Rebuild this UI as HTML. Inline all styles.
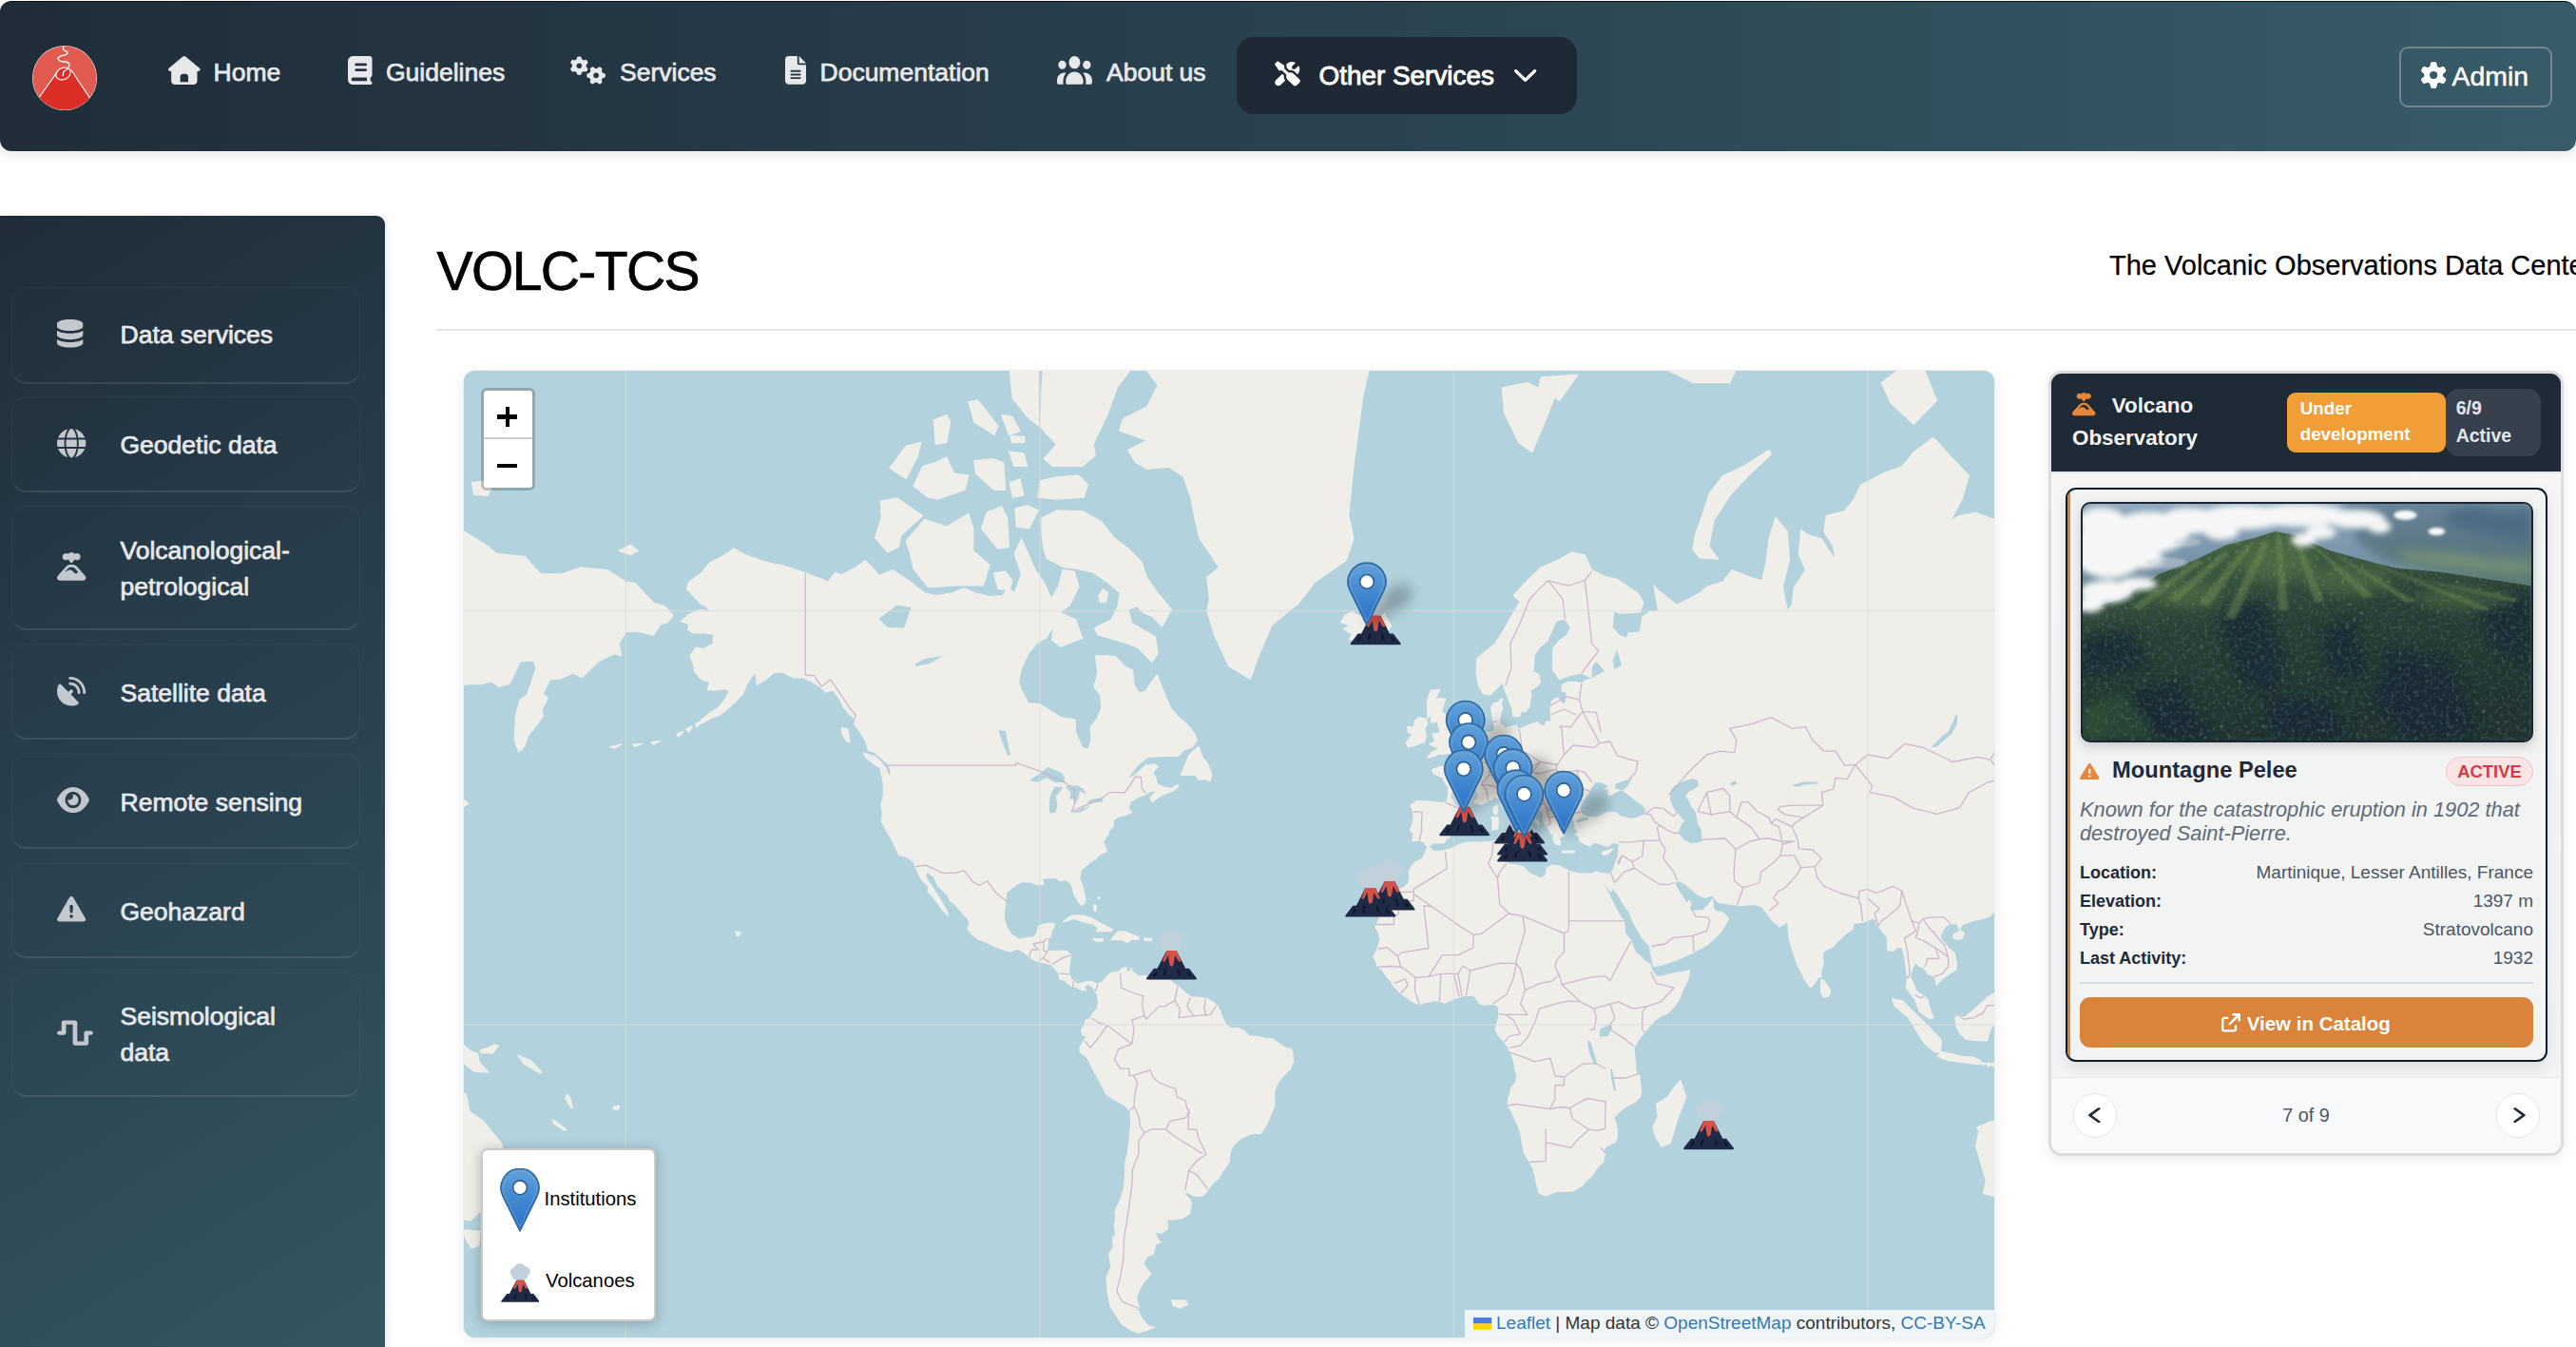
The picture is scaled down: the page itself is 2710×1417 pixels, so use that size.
<!DOCTYPE html>
<html><head><meta charset="utf-8"><title>VOLC-TCS</title>
<style>
*{box-sizing:border-box;margin:0;padding:0}
html,body{width:2710px;height:1417px;overflow:hidden;background:#fff;font-family:"Liberation Sans",sans-serif}
.abs{position:absolute}
svg.ic{position:absolute;fill:currentColor}
#nav{position:absolute;left:0;top:1px;width:2710px;height:158px;border-radius:12px;border-top:1px solid #0b111b;background:linear-gradient(90deg,#202d39 0%,#2a414e 50%,#385c69 100%);box-shadow:0 4px 14px rgba(0,0,0,0.10)}
#topline{position:absolute;left:0;top:0;width:2710px;height:2px;background:#1b2530}
.nt{position:absolute;color:#e6e8eb;font-weight:normal;font-size:26.5px;-webkit-text-stroke:0.75px currentColor;white-space:nowrap;line-height:1}
#other{position:absolute;left:1301px;top:37px;width:358px;height:80.5px;border-radius:18px;background:#1f2935}
#admin{position:absolute;left:2524px;top:47px;width:161px;height:64px;border-radius:9px;border:2px solid rgba(255,255,255,0.28)}
#side{position:absolute;left:0;top:227px;width:405px;height:1200px;border-radius:0 9px 0 0;background:linear-gradient(148deg,#202d39 0%,#2a4150 50%,#35575f 100%);box-shadow:2px 0 10px rgba(0,0,0,0.08)}
.si{position:absolute;left:12px;width:367px;border-radius:16px;border:1px solid rgba(255,255,255,0.035);border-bottom:2px solid rgba(255,255,255,0.10)}
.st{position:absolute;left:126.5px;color:#e6e8eb;font-weight:normal;font-size:26.5px;-webkit-text-stroke:0.75px currentColor;line-height:37.5px;white-space:nowrap}
.sic{color:#c3c8ce}
#title{position:absolute;left:459.5px;top:256.5px;font-size:57px;letter-spacing:-1.6px;-webkit-text-stroke:0.7px #000;color:#000;line-height:1;white-space:nowrap}
#tag{position:absolute;left:2219px;top:264.5px;font-size:29px;-webkit-text-stroke:0.25px #000;color:#000;line-height:1;white-space:nowrap}
#hr{position:absolute;left:459px;top:346px;width:2251px;height:2px;background:#dfe4ea}
#map{position:absolute;left:488px;top:390px;width:1610px;height:1017px;border-radius:12px;overflow:hidden;background:#b3d1dc;box-shadow:0 0 0 1px #eceef1,0 4px 16px rgba(0,0,0,0.08)}
#panel{position:absolute;left:2155px;top:390px;width:542px;height:826px;border-radius:14px;background:#f7f8fa;border:3px solid #dcdcdc;box-shadow:0 4px 14px rgba(0,0,0,0.08);overflow:hidden}
</style></head>
<body>
<div id="nav">
  <!-- logo -->
  <svg class="abs" style="left:33px;top:45px" width="70" height="70" viewBox="0 0 70 70">
    <defs><clipPath id="lc"><circle cx="35" cy="35" r="33.5"/></clipPath></defs>
    <circle cx="35" cy="35" r="34" fill="#fff"/>
    <g clip-path="url(#lc)">
      <rect x="0" y="0" width="70" height="70" fill="#e05a4f"/>
      <path d="M8 56 L28 27 Q35 22 41 26 L62 58 L70 70 L0 70 Z" fill="#dc2d26"/>
    </g>
    <path d="M8.5 55 L28 27.5 M41.5 26 L61.5 56" stroke="#fff" stroke-width="1.2" fill="none"/>
    <ellipse cx="33.5" cy="30.5" rx="8" ry="6" transform="rotate(-25 33.5 30.5)" fill="none" stroke="#fff" stroke-width="1.2"/>
    <path d="M34 2 Q32 6 37 7 Q40 9 35 11 Q28 12 28 15 Q29 18 36 18 Q42 19 39 24 Q37 27 34 28 L33 33" stroke="#fff" stroke-width="1.3" fill="none"/>
  </svg>
  <svg class="ic" style="left:176.69px;top:56.90px;color:#e6e8eb;overflow:visible" width="33.61" height="30.00" viewBox="0 0 512 512" preserveAspectRatio="none"><path d="M277.8 8.6c-12.3-11.4-31.3-11.4-43.5 0l-224 208c-9.6 9-12.8 22.9-8 35.1S18.8 272 32 272h16v176c0 35.3 28.7 64 64 64h288c35.3 0 64-28.7 64-64V272h16c13.2 0 25-8.1 29.8-20.3s1.6-26.2-8-35.1zM240 320h32c26.5 0 48 21.5 48 48v96H192v-96c0-26.5 21.5-48 48-48"/></svg>
  <div class="nt" style="left:224.5px;top:60.6px">Home</div>
  <svg class="ic" style="left:365.50px;top:56.90px;color:#e6e8eb;overflow:visible" width="25.50" height="30.00" viewBox="0 0 448 512" preserveAspectRatio="none"><path d="M384 512H96c-53 0-96-43-96-96V96C0 43 43 0 96 0h304c26.5 0 48 21.5 48 48v288c0 20.9-13.4 38.7-32 45.3V448c17.7 0 32 14.3 32 32s-14.3 32-32 32zM96 384c-17.7 0-32 14.3-32 32s14.3 32 32 32h256v-64zm32-232c0 13.3 10.7 24 24 24h176c13.3 0 24-10.7 24-24s-10.7-24-24-24H152c-13.3 0-24 10.7-24 24m24 72c-13.3 0-24 10.7-24 24s10.7 24 24 24h176c13.3 0 24-10.7 24-24s-10.7-24-24-24z"/></svg>
  <div class="nt" style="left:406px;top:60.6px">Guidelines</div>
  <svg class="ic" style="left:600.49px;top:57.14px;color:#e6e8eb;overflow:visible" width="37.39" height="29.68" viewBox="0 0 640 512" preserveAspectRatio="none"><path d="M308.5 135.3c7.1-6.3 9.9-16.2 6.2-25c-2.3-5.3-4.8-10.5-7.6-15.5L304 89.4c-3-5-6.3-9.9-9.8-14.6c-5.7-7.6-15.7-10.1-24.7-7.1l-28.2 9.3c-10.7-8.8-23-16-36.2-20.9L199 27.1c-1.9-9.3-9.1-16.7-18.5-17.8C173.9 8.4 167.2 8 160.4 8h-.7c-6.8 0-13.5 .4-20.1 1.2c-9.4 1.1-16.6 8.6-18.5 17.8L115 56.1c-13.3 5-25.5 12.1-36.2 20.9L50.5 67.8c-9-3-19-.5-24.7 7.1c-3.5 4.7-6.8 9.6-9.9 14.6l-3 5.3c-2.8 5-5.3 10.2-7.6 15.6c-3.7 8.7-.9 18.6 6.2 25l22.2 19.8C32.6 161.9 32 168.9 32 176s.6 14.1 1.7 20.9L11.5 216.7c-7.1 6.3-9.9 16.2-6.2 25c2.3 5.3 4.8 10.5 7.6 15.6l3 5.2c3 5.1 6.3 9.9 9.9 14.6c5.7 7.6 15.7 10.1 24.7 7.1l28.2-9.3c10.7 8.8 23 16 36.2 20.9l6.1 29.1c1.9 9.3 9.1 16.7 18.5 17.8c6.7 .8 13.5 1.2 20.4 1.2s13.7-.4 20.4-1.2c9.4-1.1 16.6-8.6 18.5-17.8l6.1-29.1c13.3-5 25.5-12.1 36.2-20.9l28.2 9.3c9 3 19 .5 24.7-7.1c3.5-4.7 6.8-9.5 9.8-14.6l3.1-5.4c2.8-5 5.3-10.1 7.6-15.5c3.7-8.7 .9-18.6-6.2-25l-22.2-19.8c1.1-6.8 1.7-13.8 1.7-20.9s-.6-14.1-1.7-20.9l22.2-19.8zM112 176a48 48 0 1 1 96 0 48 48 0 1 1 -96 0zM504.7 500.5c6.3 7.1 16.2 9.9 25 6.2c5.3-2.3 10.5-4.8 15.5-7.6l5.4-3.1c5-3 9.8-6.3 14.5-9.8c7.6-5.7 10.1-15.7 7.1-24.7l-9.3-28.2c8.8-10.7 16-23 20.9-36.2l29.1-6.1c9.3-1.9 16.7-9.1 17.8-18.5c.8-6.7 1.2-13.5 1.2-20.4s-.4-13.7-1.2-20.4c-1.1-9.4-8.6-16.6-17.8-18.5L583.9 307c-5-13.3-12.1-25.5-20.9-36.2l9.3-28.2c3-9 .5-19-7.1-24.7c-4.7-3.5-9.6-6.8-14.6-9.9l-5.3-3c-5-2.8-10.2-5.3-15.6-7.6c-8.7-3.7-18.6-.9-25 6.2l-19.8 22.2c-6.8-1.1-13.8-1.7-20.9-1.7s-14.1 .6-20.9 1.7l-19.8-22.2c-6.3-7.1-16.2-9.9-25-6.2c-5.3 2.3-10.5 4.8-15.6 7.6l-5.2 3c-5.1 3-9.9 6.3-14.6 9.9c-7.6 5.7-10.1 15.7-7.1 24.7l9.3 28.2c-8.8 10.7-16 23-20.9 36.2L315.1 313c-9.3 1.9-16.7 9.1-17.8 18.5c-.8 6.7-1.2 13.5-1.2 20.4s.4 13.7 1.2 20.4c1.1 9.4 8.6 16.6 17.8 18.5l29.1 6.1c5 13.3 12.1 25.5 20.9 36.2l-9.3 28.2c-3 9-.5 19 7.1 24.7c4.7 3.5 9.5 6.8 14.6 9.8l5.4 3.1c5 2.8 10.1 5.3 15.5 7.6c8.7 3.7 18.6 .9 25-6.2l19.8-22.2c6.8 1.1 13.8 1.7 20.9 1.7s14.1-.6 20.9-1.7l19.8 22.2zM464 304a48 48 0 1 1 0 96 48 48 0 1 1 0-96z"/></svg>
  <div class="nt" style="left:652px;top:60.6px">Services</div>
  <svg class="ic" style="left:826.00px;top:57.20px;color:#e6e8eb;overflow:visible" width="22.00" height="29.70" viewBox="0 0 384 512" preserveAspectRatio="none"><path d="M64 0C28.7 0 0 28.7 0 64V448c0 35.3 28.7 64 64 64H320c35.3 0 64-28.7 64-64V160H256c-17.7 0-32-14.3-32-32V0H64zM256 0V128H384L256 0zM112 256H272c8.8 0 16 7.2 16 16s-7.2 16-16 16H112c-8.8 0-16-7.2-16-16s7.2-16 16-16zm0 64H272c8.8 0 16 7.2 16 16s-7.2 16-16 16H112c-8.8 0-16-7.2-16-16s7.2-16 16-16zm0 64H272c8.8 0 16 7.2 16 16s-7.2 16-16 16H112c-8.8 0-16-7.2-16-16s7.2-16 16-16z"/></svg>
  <div class="nt" style="left:862.5px;top:60.6px">Documentation</div>
  <svg class="ic" style="left:1112.20px;top:56.18px;color:#e6e8eb;overflow:visible" width="36.90" height="32.77" viewBox="0 0 640 512" preserveAspectRatio="none"><path d="M320 16a104 104 0 1 1 0 208 104 104 0 1 1 0-208M96 88a72 72 0 1 1 0 144 72 72 0 1 1 0-144M0 416c0-70.7 57.3-128 128-128 12.8 0 25.2 1.9 36.9 5.4C132 330.2 112 378.8 112 432v16c0 11.4 2.4 22.2 6.7 32H32c-17.7 0-32-14.3-32-32zm521.3 64c4.3-9.8 6.7-20.6 6.7-32v-16c0-53.2-20-101.8-52.9-138.6 11.7-3.5 24.1-5.4 36.9-5.4 70.7 0 128 57.3 128 128v32c0 17.7-14.3 32-32 32zM472 160a72 72 0 1 1 144 0 72 72 0 1 1-144 0M160 432c0-88.4 71.6-160 160-160s160 71.6 160 160v16c0 17.7-14.3 32-32 32H192c-17.7 0-32-14.3-32-32z"/></svg>
  <div class="nt" style="left:1164px;top:60.6px">About us</div>
  <div id="other"></div>
  <svg class="ic" style="left:1339.76px;top:62.65px;color:#ffffff;overflow:visible" width="28.83" height="24.95" viewBox="0 0 576 512" preserveAspectRatio="none"><path d="M70.8-6.7c5.4-5.4 13.8-6.2 20.2-2l118.9 79.2c8.9 5.9 14.2 15.9 14.2 26.6v49.6l90.8 90.8c33.3-15 73.9-8.9 101.2 18.5l126.1 126.1c18.7 18.7 18.7 49.1 0 67.9l-60.1 60.1c-18.7 18.7-49.1 18.7-67.9 0L288.1 384c-27.4-27.4-33.5-67.9-18.5-101.2L178.8 192h-49.6c-10.7 0-20.7-5.3-26.6-14.2L23.4 58.9c-4.2-6.3-3.4-14.8 2-20.2zm145 303.5c-6.3 36.9 2.3 75.9 26.2 107.2l-94.9 95c-28.1 28.1-73.7 28.1-101.8 0s-28.1-73.7 0-101.8l135.4-135.5 35.2 35.1zM384.1 0c20.1 0 39.4 3.7 57.1 10.5 10 3.8 11.8 16.5 4.3 24.1l-56.7 56.7c-3 3-4.7 7.1-4.7 11.3V144c0 8.8 7.2 16 16 16h41.4c4.2 0 8.3-1.7 11.3-4.7l56.7-56.7c7.6-7.5 20.3-5.7 24.1 4.3 6.8 17.7 10.5 37 10.5 57.1 0 43.2-17.2 82.3-45 111.1L450 222c-33.1-33-78.5-45.7-121.1-38.4l-56.8-56.8V97.1l-.2-5c-.8-12.4-4.4-24.3-10.5-34.9C290.8 22.2 334.8 0 384.1-.1z"/></svg>
  <div class="nt" style="left:1387.5px;top:64px;color:#fff;font-size:27.9px;-webkit-text-stroke:0.9px #fff">Other Services</div>
  <svg class="ic" style="left:1593.20px;top:62.64px;color:#ffffff;overflow:visible" width="23.29" height="25.79" viewBox="0 0 448 512" preserveAspectRatio="none"><path d="M201.4 406.6c12.5 12.5 32.8 12.5 45.3 0l192-192c12.5-12.5 12.5-32.8 0-45.3s-32.8-12.5-45.3 0L224 338.7 54.6 169.4c-12.5-12.5-32.8-12.5-45.3 0s-12.5 32.8 0 45.3l192 192z"/></svg>
  <div id="admin"></div>
  <svg class="ic" style="left:2546.82px;top:63.71px;color:#ffffff;overflow:visible" width="26.32" height="26.07" viewBox="0 0 512 512" preserveAspectRatio="none"><path d="M195.1 9.5c3-14.8 16.1-25.5 31.3-25.5h59.8c15.2 0 28.3 10.7 31.3 25.5l14.5 70c14.1 6 27.3 13.7 39.3 22.8l67.8-22.5c14.4-4.8 30.2 1.2 37.8 14.4l29.9 51.8c7.6 13.2 4.9 29.8-6.5 39.9L447 233.3c.9 7.4 1.3 15 1.3 22.7s-.5 15.3-1.3 22.7l53.4 47.5c11.4 10.1 14 26.8 6.5 39.9L477 417.9c-7.6 13.1-23.4 19.2-37.8 14.4l-67.8-22.5c-12.1 9.1-25.3 16.7-39.3 22.8l-14.4 69.9c-3.1 14.9-16.2 25.5-31.3 25.5h-59.8c-15.2 0-28.3-10.7-31.3-25.5l-14.4-69.9c-14.1-6-27.2-13.7-39.3-22.8l-68.1 22.5c-14.4 4.8-30.2-1.2-37.8-14.4L5.8 366.1c-7.6-13.2-4.9-29.8 6.5-39.9l53.4-47.5c-.9-7.4-1.3-15-1.3-22.7s.5-15.3 1.3-22.7l-53.4-47.5C.9 175.7-1.7 159 5.8 145.9l29.9-51.8c7.6-13.2 23.4-19.2 37.8-14.4l67.8 22.5c12.1-9.1 25.3-16.7 39.3-22.8zM256.3 336a80 80 0 1 0-.6-160 80 80 0 1 0 .6 160"/></svg>
  <div class="nt" style="left:2579.5px;top:63.5px;color:#fff;font-size:28.4px;-webkit-text-stroke:0.5px #fff">Admin</div>
</div>

<div id="side">
  <div class="si" style="top:75px;height:102px"></div>
  <div class="si" style="top:190px;height:101px"></div>
  <div class="si" style="top:305px;height:131px"></div>
  <div class="si" style="top:450px;height:101px"></div>
  <div class="si" style="top:565px;height:101px"></div>
  <div class="si" style="top:681px;height:100px"></div>
  <div class="si" style="top:796px;height:131px"></div>
</div>
<div id="sideitems">
  <svg class="ic" style="left:60.00px;top:336.10px;color:#c3c8ce;overflow:visible" width="27.30" height="29.50" viewBox="0 0 448 512" preserveAspectRatio="none"><path d="M448 205.8c-14.8 9.8-31.8 17.7-49.5 24-47 16.8-108.7 26.2-174.5 26.2s-127.6-9.5-174.5-26.2c-17.6-6.3-34.7-14.2-49.5-24V288c0 44.2 100.3 80 224 80s224-35.8 224-80zm0-77.8V80c0-44.2-100.3-80-224-80S0 35.8 0 80v48c0 44.2 100.3 80 224 80s224-35.8 224-80m-49.5 261.8C351.6 406.5 289.9 416 224 416s-127.6-9.5-174.5-26.2c-17.6-6.3-34.7-14.2-49.5-24V432c0 44.2 100.3 80 224 80s224-35.8 224-80v-66.2c-14.8 9.8-31.8 17.7-49.5 24"/></svg>
  <div class="st" style="top:334px">Data services</div>
  <svg class="ic" style="left:60.20px;top:450.60px;color:#c3c8ce;overflow:visible" width="30.40" height="30.40" viewBox="0 0 512 512" preserveAspectRatio="none"><path d="M352 256c0 22.2-1.2 43.6-3.3 64H163.3c-2.2-20.4-3.3-41.8-3.3-64s1.2-43.6 3.3-64H348.7c2.2 20.4 3.3 41.8 3.3 64zm28.8-64H503.9c5.3 20.5 8.1 41.9 8.1 64s-2.8 43.5-8.1 64H380.8c2.1-20.6 3.2-42 3.2-64s-1.1-43.4-3.2-64zm112.6-32H376.7c-10-63.9-29.8-117.4-55.3-151.6c78.3 20.7 142 77.5 171.9 151.6zm-149.1 0H167.7c6.1-36.4 15.5-68.6 27-94.7c10.5-23.6 22.2-40.7 33.5-51.5C239.4 3.2 248.7 0 256 0s16.6 3.2 27.8 13.8c11.3 10.8 23 27.9 33.5 51.5c11.6 26 20.9 58.2 27 94.7zm-209 0H18.6C48.6 85.9 112.2 29.1 190.6 8.4C165.1 42.6 145.3 96.1 135.3 160zM8.1 192H131.2c-2.1 20.6-3.2 42-3.2 64s1.1 43.4 3.2 64H8.1C2.8 299.5 0 278.1 0 256s2.8-43.5 8.1-64zM194.7 446.6c-11.6-26-20.9-58.2-27-94.6H344.3c-6.1 36.4-15.5 68.6-27 94.6c-10.5 23.6-22.2 40.7-33.5 51.5C272.6 508.8 263.3 512 256 512s-16.6-3.2-27.8-13.8c-11.3-10.8-23-27.9-33.5-51.5zM135.3 352c10 63.9 29.8 117.4 55.3 151.6C112.2 482.9 48.6 426.1 18.6 352H135.3zm358.1 0c-30 74.1-93.6 130.9-171.9 151.6c25.5-34.2 45.2-87.7 55.3-151.6H493.4z"/></svg>
  <div class="st" style="top:449.5px">Geodetic data</div>
  <svg class="ic" style="left:60.20px;top:581.10px;color:#c3c8ce;overflow:visible" width="30.39" height="29.69" viewBox="0 0 512 512" preserveAspectRatio="none"><path d="M160 144c-35.3 0-64-28.7-64-64s28.7-64 64-64c15.7 0 30 5.6 41.2 15C212.4 12.4 232.8 0 256 0s43.6 12.4 54.8 31c11.1-9.4 25.5-15 41.2-15 35.3 0 64 28.7 64 64s-28.7 64-64 64c-14.7 0-28.3-5-39.1-13.3l-32 48C275.3 187 266 192 256 192s-19.3-5-24.9-13.3l-32-48C188.3 139 174.7 144 160 144m-16 208 48.4-24.2c10.2-5.1 21.6-7.8 33-7.8 19.6 0 38.4 7.8 52.2 21.6l32.5 32.5c6.3 6.3 14.9 9.9 23.8 9.9 11.3 0 21.8-5.6 28-15l9.7-14.6-59-66.3c-9.1-10.2-22.2-16.1-35.9-16.1h-41.8c-13.7 0-26.8 5.9-35.9 16.1l-59.9 67.4 4.7-3.5zm19.4-95.8c18.2-20.5 44.3-32.2 71.8-32.2H277c27.4 0 53.5 11.7 71.8 32.2l150.2 169c8.5 9.5 13.2 21.9 13.2 34.7 0 28.8-23.4 52.2-52.2 52.2L52.2 512C23.4 512 0 488.6 0 459.8c0-12.7 4.7-25.1 13.2-34.6z"/></svg>
  <div class="st" style="top:561px">Volcanological-<br>petrological</div>
  <svg class="ic" style="left:60.29px;top:711.80px;color:#c3c8ce;overflow:visible" width="30.21" height="30.49" viewBox="0 0 512 512" preserveAspectRatio="none"><path d="M232 0c154.6 0 280 125.4 280 280 0 13.3-10.7 24-24 24s-24-10.7-24-24c0-128.1-103.9-232-232-232-13.3 0-24-10.7-24-24s10.7-24 24-24m-24 120c0-13.3 10.7-24 24-24 101.6 0 184 82.4 184 184 0 13.3-10.7 24-24 24s-24-10.7-24-24c0-75.1-60.9-136-136-136-13.3 0-24-10.7-24-24M26.4 142.7c8.8-17.9 32.4-19.9 46.5-5.8l128.5 128.5 32-32c12.5-12.5 32.8-12.5 45.3 0s12.5 32.8 0 45.3l-32 32 128.5 128.5c14.1 14.1 12 37.6-5.8 46.5-34.2 16.9-72.6 26.4-113.3 26.4-141.4 0-256-114.6-256-256 0-40.7 9.5-79.2 26.4-113.3z"/></svg>
  <div class="st" style="top:711px">Satellite data</div>
  <svg class="ic" style="left:60.30px;top:825.96px;color:#c3c8ce;overflow:visible" width="33.89" height="30.97" viewBox="0 0 576 512" preserveAspectRatio="none"><path d="M288 32c-80.8 0-145.5 36.8-192.6 80.6-46.8 43.5-78.1 95.4-93 131.1-3.3 7.9-3.3 16.7 0 24.6 14.9 35.7 46.2 87.7 93 131.1C142.5 443.1 207.2 480 288 480s145.5-36.8 192.6-80.6c46.8-43.5 78.1-95.4 93-131.1 3.3-7.9 3.3-16.7 0-24.6-14.9-35.7-46.2-87.7-93-131.1C433.5 68.9 368.8 32 288 32M144 256a144 144 0 1 1 288 0 144 144 0 1 1-288 0m144-64c0 35.3-28.7 64-64 64-11.5 0-22.3-3-31.7-8.4-1 10.9-.1 22.1 2.9 33.2 13.7 51.2 66.4 81.6 117.6 67.9s81.6-66.4 67.9-117.6c-12.2-45.7-55.5-74.8-101.1-70.8 5.3 9.3 8.4 20.1 8.4 31.7"/></svg>
  <div class="st" style="top:826px">Remote sensing</div>
  <svg class="ic" style="left:60.30px;top:943.10px;color:#c3c8ce;overflow:visible" width="30.20" height="28.16" viewBox="0 0 512 512" preserveAspectRatio="none"><path d="M256 0c14.7 0 28.2 8.1 35.2 21l216 400c6.7 12.4 6.4 27.4-.8 39.5S486.1 480 472 480H40c-14.1 0-27.2-7.4-34.4-19.5s-7.5-27.1-.8-39.5l216-400c7-12.9 20.5-21 35.2-21m0 352a32 32 0 1 0 0 64 32 32 0 1 0 0-64m0-192c-18.2 0-32.7 15.5-31.4 33.7l7.4 104c.9 12.5 11.4 22.3 23.9 22.3 12.6 0 23-9.7 23.9-22.3l7.4-104c1.3-18.2-13.1-33.7-31.4-33.7z"/></svg>
  <div class="st" style="top:940.5px">Geohazard</div>
  <svg class="ic" style="left:60.30px;top:1068.50px;color:#c3c8ce;overflow:visible" width="37.90" height="35.20" viewBox="0 0 512 512" preserveAspectRatio="none"><path d="M64 96c0-17.7 14.3-32 32-32h160c17.7 0 32 14.3 32 32v288h96V256c0-17.7 14.3-32 32-32h64c17.7 0 32 14.3 32 32s-14.3 32-32 32h-32v128c0 17.7-14.3 32-32 32H256c-17.7 0-32-14.3-32-32V128h-96v128c0 17.7-14.3 32-32 32H32c-17.7 0-32-14.3-32-32s14.3-32 32-32h32z"/></svg>
  <div class="st" style="top:1051px">Seismological<br>data</div>
</div>

<div id="title">VOLC-TCS</div>
<div id="tag">The Volcanic Observations Data Center</div>
<div id="hr"></div>

<div id="map">
<svg class="abs" style="left:0;top:0" width="1610" height="1017" viewBox="0 0 1610 1017">
<rect width="1610" height="1017" fill="#b2d2dd"/>
<path fill="#f0eee9" stroke="#f0eee9" stroke-width="1.2" stroke-linejoin="round" d="M228.5 263.4L237.2 256.3L248.8 251.4L259.4 253.9L255.1 247.8L249.3 245.3L234.3 229.3L237.2 222.0L250.2 212.5L258.0 202.6L272.0 195.3L284.1 187.1L296.2 193.8L313.1 199.7L322.8 202.6L337.3 205.4L359.1 212.5L373.6 218.0L383.3 222.0L390.6 212.5L397.8 214.5L412.3 206.9L422.0 199.7L426.9 204.0L436.5 215.2L451.1 209.7L468.0 220.7L484.9 233.9L497.0 236.5L514.0 233.9L526.1 228.7L538.2 233.9L552.7 237.7L567.2 236.5L572.0 227.4L579.3 233.9L586.5 213.9L579.3 192.4L586.5 177.1L593.8 192.4L601.1 209.7L610.7 223.4L618.0 240.3L625.3 227.4L630.1 209.7L642.2 211.1L647.0 227.4L637.4 246.5L627.7 253.9L620.4 268.0L613.2 280.5L602.5 287.1L593.8 297.7L586.5 313.0L583.6 327.7L585.6 334.3L593.8 349.8L605.9 350.7L627.7 364.6L643.2 367.1L643.6 380.4L650.4 396.3L656.7 398.6L660.1 388.5L659.1 374.7L666.4 365.5L670.7 355.1L669.8 341.7L663.0 332.4L666.9 318.0L664.5 299.8L676.1 299.8L685.7 300.8L695.4 311.0L703.6 315.0L705.1 330.5L709.9 338.9L717.2 337.1L723.0 327.7L729.3 320.0L734.1 332.4L739.9 346.2L743.8 355.1L751.1 363.7L760.7 372.2L768.0 380.4L771.4 388.5L766.6 395.5L758.3 398.6L751.1 405.5L736.5 405.5L719.6 406.3L709.9 413.8L702.7 422.5L697.8 429.7L705.1 426.1L717.2 415.2L726.9 413.8L730.3 416.7L724.5 422.5L727.8 428.3L729.3 434.6L736.5 438.1L743.8 439.5L751.1 435.3L752.0 437.4L746.2 442.3L734.1 446.4L724.0 453.8L722.0 449.1L728.8 441.6L722.0 442.3L717.2 445.7L709.9 448.4L701.7 453.1L698.8 459.7L702.7 465.0L695.4 467.5L688.2 469.5L683.3 472.7L683.3 479.0L679.0 483.4L678.0 487.1L674.1 493.8L672.2 495.0L676.1 504.0L675.6 505.8L669.3 508.8L664.0 514.0L658.2 517.5L654.3 521.0L649.5 525.0L647.5 533.5L651.4 544.0L653.8 554.9L653.3 560.3L649.5 562.5L646.1 558.2L641.2 549.5L640.7 544.0L637.4 538.5L633.5 535.7L627.7 536.8L622.8 533.5L615.6 533.5L608.3 534.6L609.8 540.7L603.5 540.7L596.2 537.9L587.5 537.4L582.7 539.6L574.4 545.7L570.6 549.0L570.1 557.6L568.6 567.3L568.2 577.3L571.1 585.1L575.9 593.3L581.7 596.4L584.1 598.4L593.8 596.4L600.1 595.9L603.5 590.2L604.4 584.0L613.2 581.4L620.4 581.4L621.4 583.5L618.5 589.2L617.0 595.4L614.6 596.9L614.1 604.5L612.7 610.1L618.0 610.6L627.7 610.1L634.9 610.6L638.8 614.6L637.4 622.1L636.9 629.5L636.4 634.4L638.8 639.4L643.6 643.8L647.5 645.2L654.8 642.6L660.1 642.3L666.9 645.7L664.5 653.1L661.5 648.2L656.7 644.8L652.4 648.2L654.3 652.1L649.5 651.1L644.6 648.7L639.8 647.7L636.4 645.2L631.1 640.8L626.7 639.9L626.2 634.4L621.4 628.5L617.5 624.5L613.2 623.6L606.9 622.1L600.1 620.1L594.8 616.6L587.5 610.6L582.2 608.5L574.4 611.1L564.8 608.0L558.0 605.5L550.3 601.5L540.6 597.9L533.3 591.8L529.9 587.1L531.9 581.4L529.9 576.2L526.5 572.5L521.2 566.7L516.4 561.4L511.5 557.6L509.1 552.2L504.3 547.3L498.5 541.3L494.6 532.9L486.4 526.1L485.9 532.9L491.7 541.3L497.0 549.5L501.9 557.6L505.7 564.1L507.7 567.3L509.6 574.1L506.7 570.4L501.9 565.7L498.5 560.3L494.6 554.9L488.3 547.9L488.8 542.4L482.5 536.8L478.6 530.1L474.8 521.6L473.8 517.5L468.0 512.9L463.2 510.5L457.8 509.4L454.4 502.3L451.1 495.6L448.6 490.2L446.2 487.1L442.3 479.6L439.4 474.0L440.4 465.0L439.0 457.1L441.4 447.0L441.4 435.3L440.4 428.3L438.0 419.6L445.2 421.1L447.7 428.3L449.1 421.1L447.2 415.2L443.8 411.5L437.5 406.3L432.7 401.7L425.4 399.4L423.0 390.8L418.2 382.0L410.9 372.2L409.9 364.6L405.1 361.2L400.2 355.1L395.4 345.3L388.1 336.1L380.9 338.0L374.6 332.4L365.4 326.7L356.7 322.9L347.0 322.9L334.9 317.0L325.2 318.0L318.0 324.8L308.3 330.5L306.9 318.0L313.1 311.0L303.5 320.9L297.2 330.5L293.8 339.8L285.1 348.9L276.9 356.0L269.6 362.0L259.9 365.5L252.7 369.7L244.0 373.0L250.2 367.1L258.5 360.3L267.2 355.1L274.4 346.2L279.3 337.1L274.4 334.3L264.8 336.1L256.5 335.7L258.5 327.7L250.2 324.8L243.0 317.0L241.0 308.0L238.1 299.8L244.0 291.4L252.7 292.4L262.3 287.1L262.3 277.1L252.7 276.0L241.0 276.0L235.7 272.6L237.2 266.9ZM666.9 645.7L672.2 642.3L676.1 637.4L679.5 634.4L682.4 633.2L688.2 632.5L693.5 628.5L696.4 627.5L697.4 631.5L694.9 634.4L695.4 635.4L693.5 631.5L701.7 632.0L701.7 628.5L703.6 632.0L709.9 636.9L717.2 636.4L724.5 638.4L731.7 636.4L739.0 635.9L741.4 639.4L746.2 644.3L751.1 647.2L755.9 651.6L759.8 655.0L765.6 658.9L775.3 659.4L782.5 660.9L787.4 663.8L792.2 667.7L794.6 671.1L797.0 678.3L799.5 683.2L801.9 688.0L806.7 691.9L814.0 691.4L821.2 694.3L826.1 700.1L833.3 700.1L843.0 702.0L850.3 702.5L855.1 705.9L862.4 711.3L870.6 713.7L872.0 719.5L872.5 727.3L869.6 734.2L864.8 739.1L859.9 744.0L855.1 751.5L852.7 758.9L852.7 774.0L849.3 781.7L846.4 788.4L843.0 796.1L838.2 802.4L832.4 802.4L826.1 803.5L817.4 807.7L810.1 814.1L806.2 821.1L805.3 832.0L799.5 840.3L794.6 848.7L788.3 854.4L783.0 861.4L777.7 867.8L769.5 868.4L763.2 865.5L758.8 863.1L758.8 866.6L764.1 872.0L765.6 876.7L763.2 887.1L755.9 891.4L746.2 893.2L739.9 892.6L740.4 902.7L734.1 907.2L726.9 905.9L730.3 914.3L733.2 916.9L727.8 918.9L725.4 929.0L718.2 932.4L714.8 939.3L719.6 946.3L723.0 949.9L714.8 959.3L709.9 968.2L707.5 975.8L710.4 986.0L705.1 987.5L709.5 989.1L712.4 995.6L719.6 1004.7L726.9 1006.3L717.2 1009.7L709.9 1012.3L702.7 1009.7L693.0 1003.8L685.7 993.2L679.9 983.6L677.0 968.2L676.1 953.5L680.9 942.8L678.5 929.0L683.3 922.2L682.4 912.3L685.7 909.1L684.3 899.5L685.7 893.2L685.3 884.0L690.6 872.0L694.5 860.2L695.4 845.9L695.9 832.0L698.8 821.1L700.3 805.6L701.7 792.0L701.2 779.1L695.4 773.0L685.7 767.5L676.1 761.4L672.2 753.9L668.3 746.5L664.0 739.1L659.1 729.3L655.3 722.0L648.5 717.1L648.0 712.2L651.9 704.9L655.3 700.1L650.9 698.6L649.5 693.8L652.8 688.0L654.3 683.2L659.1 680.7L661.5 675.9L666.4 671.1L667.4 663.8L666.4 656.5L664.5 653.1ZM718.7 -50.6L971.2 -50.6L952.0 0.0L945.9 25.4L940.9 63.2L935.9 101.1L930.8 151.4L935.9 176.8L928.3 199.4L895.5 222.2L877.8 244.9L850.0 267.6L834.9 302.9L827.3 324.4L804.5 310.5L789.4 277.7L781.8 252.4L784.4 239.9L781.8 217.1L794.5 207.0L784.4 191.9L774.2 176.8L769.2 156.5L764.2 131.2L756.6 111.1L741.4 101.1L718.7 103.5L706.1 95.9L698.5 83.4L718.7 73.3L689.7 63.2L693.5 50.6L718.7 37.9L730.1 15.1L718.7 0.0ZM922.8 264.6L927.7 256.3L934.9 253.9L942.2 257.5L951.9 256.3L961.6 252.7L968.8 255.1L971.2 261.0L975.6 268.0L969.8 278.3L961.6 283.8L950.9 288.1L939.8 283.8L931.6 282.7L934.0 277.1L925.3 271.5L932.5 268.0ZM608.0 155.0L624.1 146.9L650.8 147.8L670.4 158.5L684.7 176.3L698.9 187.0L713.2 201.3L718.5 217.3L731.0 235.2L744.3 251.2L734.6 269.0L723.9 258.3L715.0 254.7L707.8 247.6L698.9 251.2L702.5 265.4L727.4 279.7L730.1 297.5L723.9 306.4L707.8 290.4L691.8 285.0L666.8 277.9L663.3 270.8L681.1 261.9L688.2 247.6L690.0 233.4L677.5 222.7L661.5 211.9L645.4 208.4L631.2 206.6L613.4 197.7L609.8 187.0L608.0 170.9ZM465.3 179.4L484.6 156.3L507.8 164.1L530.9 150.6L535.8 165.9L535.8 189.2L553.2 204.6L546.4 225.8L517.4 225.8L488.5 227.8L473.1 208.4L469.2 191.0ZM438.3 137.0L455.7 134.1L482.7 152.4L459.6 173.6L457.6 185.3L446.0 191.0L432.5 175.7L439.3 154.5ZM473.1 121.5L482.7 100.5L496.3 96.5L507.8 90.7L515.5 108.1L530.9 110.1L527.1 125.5L498.1 135.1L488.5 133.2ZM550.3 148.7L565.7 142.9L571.5 154.5L573.4 185.3L561.9 187.3L544.5 165.9ZM580.2 144.8L592.7 141.9L604.3 146.8L594.7 165.9L581.2 164.1ZM606.2 115.8L623.6 111.9L646.8 110.1L656.4 119.6L652.5 133.2L623.6 135.1L604.3 133.2ZM610.1 -19.3L720.1 -19.3L700.8 0.0L687.3 17.3L677.7 44.4L662.2 77.3L664.2 88.8L650.7 100.5L619.7 100.5L610.1 92.6L623.6 77.3L614.0 67.6L606.2 58.0ZM573.4 -9.8L604.3 -9.8L604.3 58.0L592.7 48.4L577.3 29.1ZM536.8 94.7L556.1 92.6L567.6 96.5L569.6 125.5L558.0 125.5L538.7 108.1ZM574.4 117.7L585.0 113.8L588.9 131.2L577.3 133.2ZM620.5 265.4L627.6 254.7L643.7 261.9L650.8 281.5L627.6 290.4L618.7 283.2ZM557.5 212.5L569.6 211.1L576.9 220.7L574.4 230.0L562.3 230.0ZM772.8 395.5L777.7 407.8L782.5 413.0L786.9 425.4L784.9 431.8L780.1 429.7L772.8 430.4L770.4 425.4L754.5 425.4L758.3 415.2L763.2 404.0ZM420.1 401.7L431.7 405.5L439.0 411.5L444.8 419.6L438.0 418.2L429.3 412.3L423.0 407.0ZM397.8 375.5L404.1 377.1L406.1 390.8L402.7 390.0L397.8 382.0ZM630.3 579.6L637.4 574.1L642.7 572.8L651.9 573.1L661.5 576.2L668.8 580.9L675.6 584.0L682.6 587.9L680.9 589.7L674.1 589.5L665.4 590.0L667.8 586.1L661.5 582.0L651.9 579.9L645.6 577.8L642.2 576.2L634.9 578.8ZM681.4 597.4L688.2 590.2L695.4 589.7L704.6 593.8L710.7 596.4L709.0 598.4L702.7 598.4L697.4 601.5L693.0 598.9L681.4 598.4ZM662.0 597.4L672.7 597.9L672.2 599.9L665.9 600.4ZM715.7 596.9L724.0 597.4L723.5 599.4L716.2 599.7ZM741.9 635.4L746.7 635.4L746.2 638.9L741.9 638.9ZM163.1 189.4L175.2 183.3L183.5 189.4L175.2 193.8ZM662.5 561.9L665.4 562.5L664.9 568.8L662.5 567.3ZM667.8 553.3L669.3 555.5L666.4 556.0ZM744.8 978.1L759.3 978.1L761.7 982.0L753.5 986.0L746.2 983.6ZM286.0 589.7L291.4 591.3L288.5 594.8L286.5 592.8ZM1015.5 500.2L1020.1 496.9L1026.9 496.6L1030.8 496.9L1033.7 493.2L1036.6 491.4L1039.0 487.1L1042.4 484.3L1039.9 479.6L1041.4 476.5L1045.8 472.0L1048.7 468.8L1052.0 467.5L1056.9 464.3L1057.4 461.7L1056.2 457.8L1058.3 455.1L1063.2 454.4L1067.0 455.1L1070.4 456.4L1074.3 454.4L1077.7 451.8L1081.6 451.1L1084.5 447.7L1088.8 449.8L1091.2 453.8L1092.2 457.8L1095.1 461.0L1100.4 465.6L1104.3 468.8L1109.1 470.1L1110.6 471.4L1113.0 472.7L1114.0 475.2L1117.4 476.5L1118.8 481.5L1116.9 487.7L1119.3 489.6L1121.7 485.9L1124.1 482.8L1121.2 478.4L1124.6 473.3L1128.5 475.2L1130.4 477.7L1130.9 475.5L1128.0 472.4L1123.2 469.5L1118.3 466.9L1119.8 464.3L1114.0 464.0L1110.1 460.4L1106.7 453.1L1102.4 449.8L1101.9 444.3L1100.9 440.9L1104.3 438.8L1107.7 439.5L1107.2 445.0L1111.1 441.6L1114.0 447.0L1115.0 449.8L1120.8 453.8L1126.1 457.1L1129.0 459.7L1131.9 461.0L1135.3 465.0L1135.5 468.2L1135.8 474.0L1138.2 478.4L1141.6 482.8L1143.5 487.1L1146.4 487.7L1145.9 492.0L1147.4 496.2L1150.3 498.7L1153.2 498.7L1153.7 495.0L1151.7 492.0L1156.1 489.6L1157.5 487.7L1152.7 483.4L1150.8 479.6L1152.2 472.7L1156.6 476.5L1159.5 470.8L1167.2 471.4L1168.7 475.9L1168.2 480.3L1171.1 482.8L1172.0 486.5L1169.1 487.1L1173.5 490.8L1174.0 495.0L1177.9 496.9L1184.1 499.9L1190.0 495.9L1196.2 498.1L1203.5 500.5L1208.8 496.2L1213.2 497.5L1216.6 497.5L1214.6 501.1L1214.6 504.0L1214.6 510.5L1213.2 513.5L1210.8 519.8L1209.6 523.8L1207.4 527.8L1205.0 529.5L1197.7 528.7L1198.9 536.0L1202.1 542.4L1207.1 548.1L1208.3 544.0L1210.8 538.5L1209.8 545.7L1213.2 549.5L1218.0 557.6L1222.9 565.7L1225.3 567.8L1230.6 581.4L1235.0 588.2L1239.8 596.9L1247.5 605.0L1248.5 612.1L1250.9 623.1L1251.9 626.5L1259.2 625.5L1276.1 619.6L1294.0 611.6L1307.5 604.5L1316.2 596.4L1321.1 591.8L1326.4 584.0L1330.8 576.2L1325.0 570.4L1317.2 568.3L1314.8 566.2L1313.8 555.5L1310.0 561.4L1303.7 567.3L1293.0 568.3L1289.2 565.1L1291.1 560.9L1289.2 557.1L1286.7 560.9L1283.8 556.0L1280.0 550.6L1273.7 539.6L1276.6 536.3L1284.8 539.6L1287.2 541.8L1296.9 550.1L1305.1 554.4L1313.8 551.7L1318.7 558.7L1329.3 560.9L1342.9 562.5L1358.3 561.4L1365.6 564.1L1369.5 568.8L1374.8 575.7L1382.1 574.1L1375.3 577.3L1384.0 585.1L1392.2 579.9L1393.2 583.5L1393.7 594.3L1396.1 604.5L1398.5 612.6L1403.3 625.5L1407.2 633.0L1410.1 639.9L1416.4 648.7L1421.3 644.3L1425.1 637.9L1427.5 637.9L1428.0 630.5L1430.0 624.1L1429.5 612.1L1434.3 608.5L1439.6 606.5L1444.5 601.0L1453.2 592.8L1460.9 587.6L1462.4 581.4L1468.2 580.9L1474.5 579.3L1481.7 576.2L1485.6 577.8L1486.6 582.0L1490.4 587.6L1490.9 588.7L1497.2 595.4L1497.7 609.6L1503.5 610.6L1507.4 606.5L1513.7 607.0L1513.7 608.0L1516.6 622.1L1518.5 639.4L1517.1 649.2L1522.9 656.5L1526.7 661.8L1531.1 674.0L1535.9 677.4L1542.2 681.7L1546.1 680.7L1541.7 669.6L1540.3 662.3L1536.4 657.9L1528.2 653.1L1525.8 646.7L1521.4 637.4L1524.8 626.0L1527.7 622.1L1530.1 626.0L1536.4 628.5L1539.8 634.4L1547.1 637.4L1549.5 644.3L1548.5 646.2L1557.7 637.9L1564.0 633.5L1569.8 630.5L1570.3 622.6L1567.9 612.1L1561.6 607.0L1554.3 598.4L1553.4 594.3L1558.2 585.1L1564.0 581.4L1570.3 582.0L1573.7 587.6L1576.1 583.0L1582.4 580.4L1590.6 577.8L1594.0 577.3L1605.1 574.1L1612.9 565.7L1620.6 557.1L1626.9 544.0L1631.7 535.7L1626.9 521.6L1622.1 507.0L1634.6 492.6L1614.8 485.9L1629.3 473.3L1641.4 477.7L1651.1 492.0L1652.6 508.2L1665.6 506.4L1668.0 495.0L1660.8 482.8L1669.0 470.1L1680.1 456.4L1699.5 443.6L1721.3 418.9L1723.7 392.4L1722.2 383.7L1709.2 376.3L1704.3 372.2L1718.8 350.7L1728.5 332.4L1747.9 329.6L1760.0 329.6L1771.1 326.7L1779.3 332.4L1789.0 329.6L1791.4 326.7L1801.1 306.0L1815.6 305.0L1818.0 313.0L1813.2 327.7L1808.4 340.8L1801.1 346.2L1796.3 363.7L1795.3 388.5L1799.7 401.0L1805.9 394.8L1809.3 384.5L1815.6 376.3L1825.3 363.7L1824.3 356.8L1830.1 344.4L1825.3 339.8L1832.6 324.8L1844.7 323.8L1856.8 318.0L1866.4 322.9L1876.1 313.0L1883.4 306.0L1900.3 297.7L1907.6 299.8L1905.1 287.1L1912.4 274.9L1924.5 273.8L1941.4 278.3L1948.7 266.9L1955.9 264.6L1962.2 257.5L1953.5 247.8L1941.4 244.0L1931.8 233.9L1922.1 223.4L1912.4 222.0L1893.0 209.7L1865.5 206.9L1844.7 213.9L1822.9 213.9L1805.9 195.3L1776.9 192.4L1767.2 184.8L1743.0 169.2L1718.8 169.2L1699.5 184.8L1670.5 192.4L1660.8 169.2L1651.1 152.6L1622.1 161.0L1590.6 149.2L1573.7 152.6L1564.0 157.7L1576.1 135.1L1583.4 110.5L1564.0 90.1L1546.1 70.3L1525.3 85.8L1513.2 100.5L1496.3 106.5L1469.6 120.2L1462.4 135.1L1452.7 147.5L1433.3 152.6L1430.9 169.2L1440.6 184.8L1443.0 199.7L1428.5 177.1L1414.0 172.4L1406.7 167.6L1404.3 192.4L1411.6 209.7L1404.3 220.7L1399.5 227.4L1397.1 246.5L1392.2 252.7L1387.4 227.4L1394.6 199.7L1392.2 169.2L1380.1 154.3L1372.9 177.1L1370.4 199.7L1365.6 220.7L1355.9 218.0L1334.2 209.7L1324.5 222.0L1307.5 227.4L1300.3 233.9L1276.1 246.5L1256.7 231.3L1251.9 226.0L1256.7 252.7L1247.1 253.9L1239.8 258.7L1237.4 274.9L1225.3 276.0L1222.9 281.6L1215.6 278.3L1208.3 270.3L1209.8 252.7L1198.7 246.5L1215.6 255.1L1237.4 253.9L1240.8 244.0L1235.0 233.9L1225.3 227.4L1213.2 219.3L1201.1 216.6L1186.6 209.7L1179.3 193.8L1166.2 190.9L1152.7 198.2L1133.3 206.9L1118.8 220.7L1104.3 236.5L1111.1 242.8L1101.9 258.7L1094.6 271.5L1085.0 287.1L1075.3 294.6L1065.6 302.9L1065.1 319.0L1068.0 332.4L1072.9 339.8L1080.1 340.8L1087.4 333.3L1092.7 327.7L1094.1 332.4L1095.6 337.1L1098.5 344.4L1103.3 356.8L1103.8 363.7L1110.6 363.7L1112.0 358.6L1116.9 358.6L1120.8 353.3L1122.7 341.7L1122.2 336.1L1128.5 332.4L1132.4 328.6L1130.9 320.0L1125.1 316.0L1126.1 298.8L1132.4 290.3L1140.1 283.8L1144.5 273.8L1148.8 263.4L1158.5 261.0L1164.3 270.3L1160.4 278.3L1152.7 283.8L1145.9 291.4L1145.4 308.0L1145.4 315.0L1148.8 319.0L1152.7 324.8L1162.4 320.9L1174.5 318.0L1181.7 320.9L1188.0 323.8L1179.3 325.8L1176.9 328.6L1169.6 327.7L1160.9 327.7L1155.1 330.5L1155.1 337.1L1160.0 338.0L1159.5 346.2L1158.0 350.7L1155.1 349.8L1150.8 343.9L1146.4 346.2L1144.5 348.0L1143.0 355.1L1143.5 362.0L1144.0 368.8L1138.2 369.7L1137.7 373.0L1131.9 373.0L1130.0 369.7L1121.2 372.2L1110.1 377.1L1106.7 373.0L1100.0 374.7L1094.6 376.3L1094.1 373.0L1090.8 373.0L1089.3 368.0L1091.2 359.4L1092.7 355.1L1091.2 350.7L1092.7 344.4L1087.4 348.9L1083.0 349.8L1080.6 355.1L1082.0 363.7L1083.0 368.8L1084.5 376.3L1082.5 379.6L1075.3 380.4L1070.4 381.2L1065.6 382.0L1064.6 385.3L1062.2 390.8L1060.8 393.2L1057.9 397.1L1054.0 399.4L1050.1 400.2L1049.1 406.3L1046.2 407.8L1041.9 411.5L1036.6 412.3L1033.7 410.0L1033.7 417.4L1026.9 416.7L1018.2 419.6L1020.6 424.0L1029.3 427.6L1032.2 433.2L1035.6 438.1L1035.6 446.4L1034.1 453.8L1026.9 454.4L1014.8 453.1L1002.7 452.4L996.4 457.1L998.3 463.7L999.3 468.8L998.3 475.2L995.4 484.0L998.8 485.9L998.8 489.6L997.8 495.0L1005.1 493.8L1010.4 496.2L1011.4 498.1L1014.3 501.1ZM-726.5 500.2L-721.9 496.9L-715.1 496.6L-711.2 496.9L-708.3 493.2L-705.4 491.4L-703.0 487.1L-699.6 484.3L-702.1 479.6L-700.6 476.5L-696.2 472.0L-693.3 468.8L-690.0 467.5L-685.1 464.3L-684.6 461.7L-685.8 457.8L-683.7 455.1L-678.8 454.4L-675.0 455.1L-671.6 456.4L-667.7 454.4L-664.3 451.8L-660.4 451.1L-657.5 447.7L-653.2 449.8L-650.8 453.8L-649.8 457.8L-646.9 461.0L-641.6 465.6L-637.7 468.8L-632.9 470.1L-631.4 471.4L-629.0 472.7L-628.0 475.2L-624.6 476.5L-623.2 481.5L-625.1 487.7L-622.7 489.6L-620.3 485.9L-617.9 482.8L-620.8 478.4L-617.4 473.3L-613.5 475.2L-611.6 477.7L-611.1 475.5L-614.0 472.4L-618.8 469.5L-623.7 466.9L-622.2 464.3L-628.0 464.0L-631.9 460.4L-635.3 453.1L-639.6 449.8L-640.1 444.3L-641.1 440.9L-637.7 438.8L-634.3 439.5L-634.8 445.0L-630.9 441.6L-628.0 447.0L-627.0 449.8L-621.2 453.8L-615.9 457.1L-613.0 459.7L-610.1 461.0L-606.7 465.0L-606.5 468.2L-606.2 474.0L-603.8 478.4L-600.4 482.8L-598.5 487.1L-595.6 487.7L-596.1 492.0L-594.6 496.2L-591.7 498.7L-588.8 498.7L-588.3 495.0L-590.3 492.0L-585.9 489.6L-584.5 487.7L-589.3 483.4L-591.2 479.6L-589.8 472.7L-585.4 476.5L-582.5 470.8L-574.8 471.4L-573.3 475.9L-573.8 480.3L-570.9 482.8L-570.0 486.5L-572.9 487.1L-568.5 490.8L-568.0 495.0L-564.1 496.9L-557.9 499.9L-552.0 495.9L-545.8 498.1L-538.5 500.5L-533.2 496.2L-528.8 497.5L-525.4 497.5L-527.4 501.1L-527.4 504.0L-527.4 510.5L-528.8 513.5L-531.2 519.8L-532.4 523.8L-534.6 527.8L-537.0 529.5L-544.3 528.7L-543.1 536.0L-539.9 542.4L-534.9 548.1L-533.7 544.0L-531.2 538.5L-532.2 545.7L-528.8 549.5L-524.0 557.6L-519.1 565.7L-516.7 567.8L-511.4 581.4L-507.0 588.2L-502.2 596.9L-494.5 605.0L-493.5 612.1L-491.1 623.1L-490.1 626.5L-482.9 625.5L-465.9 619.6L-448.0 611.6L-434.5 604.5L-425.8 596.4L-420.9 591.8L-415.6 584.0L-411.2 576.2L-417.0 570.4L-424.8 568.3L-427.2 566.2L-428.2 555.5L-432.0 561.4L-438.3 567.3L-449.0 568.3L-452.8 565.1L-450.9 560.9L-452.8 557.1L-455.3 560.9L-458.2 556.0L-462.0 550.6L-468.3 539.6L-465.4 536.3L-457.2 539.6L-454.8 541.8L-445.1 550.1L-436.9 554.4L-428.2 551.7L-423.3 558.7L-412.7 560.9L-399.1 562.5L-383.7 561.4L-376.4 564.1L-372.5 568.8L-367.2 575.7L-359.9 574.1L-366.7 577.3L-358.0 585.1L-349.8 579.9L-348.8 583.5L-348.3 594.3L-345.9 604.5L-343.5 612.6L-338.7 625.5L-334.8 633.0L-331.9 639.9L-325.6 648.7L-320.7 644.3L-316.9 637.9L-314.5 637.9L-314.0 630.5L-312.0 624.1L-312.5 612.1L-307.7 608.5L-302.4 606.5L-297.5 601.0L-288.8 592.8L-281.1 587.6L-279.6 581.4L-273.8 580.9L-267.5 579.3L-260.3 576.2L-256.4 577.8L-255.4 582.0L-251.6 587.6L-251.1 588.7L-244.8 595.4L-244.3 609.6L-238.5 610.6L-234.6 606.5L-228.3 607.0L-228.3 608.0L-225.4 622.1L-223.5 639.4L-224.9 649.2L-219.1 656.5L-215.3 661.8L-210.9 674.0L-206.1 677.4L-199.8 681.7L-195.9 680.7L-200.3 669.6L-201.7 662.3L-205.6 657.9L-213.8 653.1L-216.2 646.7L-220.6 637.4L-217.2 626.0L-214.3 622.1L-211.9 626.0L-205.6 628.5L-202.2 634.4L-194.9 637.4L-192.5 644.3L-193.5 646.2L-184.3 637.9L-178.0 633.5L-172.2 630.5L-171.7 622.6L-174.1 612.1L-180.4 607.0L-187.7 598.4L-188.6 594.3L-183.8 585.1L-178.0 581.4L-171.7 582.0L-168.3 587.6L-165.9 583.0L-159.6 580.4L-151.4 577.8L-148.0 577.3L-136.9 574.1L-129.1 565.7L-121.4 557.1L-115.1 544.0L-110.3 535.7L-115.1 521.6L-119.9 507.0L-107.4 492.6L-127.2 485.9L-112.7 473.3L-100.6 477.7L-90.9 492.0L-89.4 508.2L-76.4 506.4L-74.0 495.0L-81.2 482.8L-73.0 470.1L-61.9 456.4L-42.5 443.6L-20.7 418.9L-18.3 392.4L-19.8 383.7L-32.8 376.3L-37.7 372.2L-23.2 350.7L-13.5 332.4L5.9 329.6L18.0 329.6L29.1 326.7L37.3 332.4L47.0 329.6L49.4 326.7L59.1 306.0L73.6 305.0L76.0 313.0L71.2 327.7L66.4 340.8L59.1 346.2L54.3 363.7L53.3 388.5L57.7 401.0L63.9 394.8L67.3 384.5L73.6 376.3L83.3 363.7L82.3 356.8L88.1 344.4L83.3 339.8L90.6 324.8L102.7 323.8L114.8 318.0L124.4 322.9L134.1 313.0L141.4 306.0L158.3 297.7L165.6 299.8L163.1 287.1L170.4 274.9L182.5 273.8L199.4 278.3L206.7 266.9L213.9 264.6L220.2 257.5L211.5 247.8L199.4 244.0L189.8 233.9L180.1 223.4L170.4 222.0L151.0 209.7L123.5 206.9L102.7 213.9L80.9 213.9L63.9 195.3L34.9 192.4L25.2 184.8L1.0 169.2L-23.2 169.2L-42.5 184.8L-71.5 192.4L-81.2 169.2L-90.9 152.6L-119.9 161.0L-151.4 149.2L-168.3 152.6L-178.0 157.7L-165.9 135.1L-158.6 110.5L-178.0 90.1L-195.9 70.3L-216.7 85.8L-228.8 100.5L-245.7 106.5L-272.4 120.2L-279.6 135.1L-289.3 147.5L-308.7 152.6L-311.1 169.2L-301.4 184.8L-299.0 199.7L-313.5 177.1L-328.0 172.4L-335.3 167.6L-337.7 192.4L-330.4 209.7L-337.7 220.7L-342.5 227.4L-344.9 246.5L-349.8 252.7L-354.6 227.4L-347.4 199.7L-349.8 169.2L-361.9 154.3L-369.1 177.1L-371.6 199.7L-376.4 220.7L-386.1 218.0L-407.8 209.7L-417.5 222.0L-434.5 227.4L-441.7 233.9L-465.9 246.5L-485.3 231.3L-490.1 226.0L-485.3 252.7L-494.9 253.9L-502.2 258.7L-504.6 274.9L-516.7 276.0L-519.1 281.6L-526.4 278.3L-533.7 270.3L-532.2 252.7L-543.3 246.5L-526.4 255.1L-504.6 253.9L-501.2 244.0L-507.0 233.9L-516.7 227.4L-528.8 219.3L-540.9 216.6L-555.4 209.7L-562.7 193.8L-575.8 190.9L-589.3 198.2L-608.7 206.9L-623.2 220.7L-637.7 236.5L-630.9 242.8L-640.1 258.7L-647.4 271.5L-657.0 287.1L-666.7 294.6L-676.4 302.9L-676.9 319.0L-674.0 332.4L-669.1 339.8L-661.9 340.8L-654.6 333.3L-649.3 327.7L-647.9 332.4L-646.4 337.1L-643.5 344.4L-638.7 356.8L-638.2 363.7L-631.4 363.7L-630.0 358.6L-625.1 358.6L-621.2 353.3L-619.3 341.7L-619.8 336.1L-613.5 332.4L-609.6 328.6L-611.1 320.0L-616.9 316.0L-615.9 298.8L-609.6 290.3L-601.9 283.8L-597.5 273.8L-593.2 263.4L-583.5 261.0L-577.7 270.3L-581.6 278.3L-589.3 283.8L-596.1 291.4L-596.6 308.0L-596.6 315.0L-593.2 319.0L-589.3 324.8L-579.6 320.9L-567.5 318.0L-560.3 320.9L-554.0 323.8L-562.7 325.8L-565.1 328.6L-572.4 327.7L-581.1 327.7L-586.9 330.5L-586.9 337.1L-582.0 338.0L-582.5 346.2L-584.0 350.7L-586.9 349.8L-591.2 343.9L-595.6 346.2L-597.5 348.0L-599.0 355.1L-598.5 362.0L-598.0 368.8L-603.8 369.7L-604.3 373.0L-610.1 373.0L-612.0 369.7L-620.8 372.2L-631.9 377.1L-635.3 373.0L-642.0 374.7L-647.4 376.3L-647.9 373.0L-651.2 373.0L-652.7 368.0L-650.8 359.4L-649.3 355.1L-650.8 350.7L-649.3 344.4L-654.6 348.9L-659.0 349.8L-661.4 355.1L-660.0 363.7L-659.0 368.8L-657.5 376.3L-659.5 379.6L-666.7 380.4L-671.6 381.2L-676.4 382.0L-677.4 385.3L-679.8 390.8L-681.2 393.2L-684.1 397.1L-688.0 399.4L-691.9 400.2L-692.9 406.3L-695.8 407.8L-700.1 411.5L-705.4 412.3L-708.3 410.0L-708.3 417.4L-715.1 416.7L-723.8 419.6L-721.4 424.0L-712.7 427.6L-709.8 433.2L-706.4 438.1L-706.4 446.4L-707.9 453.8L-715.1 454.4L-727.2 453.1L-739.3 452.4L-745.6 457.1L-743.7 463.7L-742.7 468.8L-743.7 475.2L-746.6 484.0L-743.2 485.9L-743.2 489.6L-744.2 495.0L-736.9 493.8L-731.6 496.2L-730.6 498.1L-727.7 501.1ZM1013.3 502.3L1015.8 501.7L1020.6 505.8L1027.4 505.2L1038.5 502.8L1047.7 498.1L1055.9 496.2L1068.0 496.2L1079.1 495.6L1089.3 493.2L1095.1 495.0L1092.7 502.3L1093.7 508.8L1090.3 513.5L1094.6 516.4L1101.9 519.8L1105.3 519.3L1115.0 522.1L1121.2 529.0L1128.5 531.8L1133.3 534.0L1138.7 530.1L1138.7 523.8L1145.4 519.8L1152.7 521.0L1157.5 523.8L1163.3 526.7L1174.5 529.0L1186.1 529.0L1191.4 526.7L1197.7 529.0L1198.9 536.0L1199.6 541.3L1204.0 549.5L1205.0 551.1L1213.2 568.3L1220.0 578.8L1221.4 584.0L1221.4 591.3L1227.7 599.4L1232.5 611.6L1237.4 615.6L1242.2 620.6L1248.0 624.5L1250.4 631.5L1254.3 636.9L1259.2 637.4L1266.4 635.4L1273.7 633.5L1283.3 632.0L1289.6 630.5L1288.7 636.9L1287.2 641.8L1282.4 651.6L1278.5 661.3L1273.7 668.6L1266.4 675.9L1260.6 678.3L1251.9 684.1L1247.1 689.9L1242.2 695.3L1239.3 699.1L1233.5 707.4L1231.1 712.2L1231.6 721.0L1232.5 726.8L1233.0 736.6L1236.9 741.6L1237.4 749.0L1238.8 758.9L1237.4 763.9L1232.5 769.0L1222.9 774.0L1220.0 776.1L1213.2 781.7L1209.8 785.8L1212.2 792.0L1213.2 797.2L1213.2 807.2L1210.8 811.4L1203.5 815.1L1199.1 818.4L1200.6 823.8L1198.7 832.0L1191.4 839.7L1186.6 847.0L1179.3 853.3L1176.4 857.3L1169.6 861.4L1165.3 863.1L1157.5 863.7L1150.3 863.1L1138.2 867.8L1133.3 866.1L1130.4 864.3L1130.0 859.1L1128.5 856.2L1127.5 848.7L1125.1 840.3L1121.2 832.5L1117.4 826.5L1115.0 821.6L1113.5 813.0L1111.6 801.9L1109.1 794.6L1105.3 786.8L1101.9 779.1L1098.5 773.0L1098.5 766.4L1100.0 762.4L1101.9 753.9L1106.2 749.5L1108.2 741.6L1105.3 734.2L1105.3 730.8L1103.3 722.0L1100.9 717.1L1098.5 711.3L1094.6 706.4L1088.8 700.1L1085.0 692.8L1086.4 688.0L1086.9 686.1L1087.9 683.2L1088.8 678.8L1088.8 673.5L1087.9 668.6L1082.5 666.2L1077.7 666.7L1070.9 667.2L1068.0 664.7L1063.2 657.9L1057.9 657.0L1051.1 657.5L1046.2 659.4L1040.4 661.3L1036.6 663.3L1031.7 665.2L1026.9 663.3L1022.0 662.3L1014.8 663.8L1005.1 666.7L997.8 663.8L989.1 657.5L983.3 652.6L977.5 646.7L975.1 641.8L971.2 637.9L968.8 634.4L965.9 630.0L960.6 627.0L960.1 622.1L956.7 616.1L959.1 612.1L961.6 607.0L963.0 602.0L964.0 598.9L962.5 591.8L958.9 585.1L960.6 581.4L963.0 576.2L964.0 569.9L968.8 565.7L971.2 557.6L976.1 552.2L979.0 547.3L988.2 544.0L994.0 538.5L994.9 533.5L994.0 527.3L996.9 521.6L1000.3 517.5L1004.6 515.2L1008.5 512.9L1011.4 507.0ZM1013.8 407.4L1021.6 405.1L1026.9 402.5L1029.5 404.0L1035.1 402.5L1040.9 401.7L1048.2 399.0L1048.2 397.1L1045.8 396.3L1047.7 393.2L1049.9 388.5L1049.6 386.5L1042.9 385.3L1042.4 380.4L1040.9 375.5L1039.5 373.8L1036.1 371.3L1034.6 368.0L1032.7 362.0L1029.3 359.4L1028.8 356.8L1031.5 349.3L1032.7 345.3L1025.4 344.4L1021.1 346.2L1024.5 339.8L1026.9 335.7L1017.2 336.1L1014.8 342.6L1013.3 348.0L1013.8 355.1L1013.8 365.5L1017.7 362.0L1017.2 370.5L1024.5 368.8L1024.9 373.0L1026.9 378.0L1026.4 381.2L1019.1 382.0L1020.6 386.1L1021.6 390.0L1015.8 393.2L1021.1 395.5L1025.9 396.7L1027.4 396.3L1024.5 398.6L1019.6 400.2L1014.8 405.5ZM1012.4 366.3L1005.6 364.6L1000.3 368.0L999.3 374.7L992.5 374.7L993.5 380.4L997.8 382.8L994.0 387.7L991.1 391.6L994.0 396.3L1001.2 394.0L1010.4 390.8L1012.4 384.5L1011.9 381.6L1010.9 376.3L1013.8 371.3ZM1101.4 490.2L1105.8 487.7L1116.9 487.1L1114.5 494.4L1114.5 497.2L1110.6 496.2L1102.4 491.4ZM1081.1 469.5L1087.9 470.1L1088.3 476.5L1087.4 482.1L1082.0 483.4L1082.0 474.0ZM1086.9 457.1L1087.6 463.0L1085.9 467.5L1083.0 464.3L1083.0 459.7ZM1155.1 505.2L1168.7 505.2L1167.7 507.0L1155.6 507.0ZM1197.7 506.4L1208.8 502.8L1205.4 507.0L1201.1 509.4L1197.7 508.8ZM1428.0 640.3L1429.5 640.3L1437.7 651.6L1436.3 657.5L1430.9 659.4L1427.5 654.0L1427.5 646.7ZM1280.0 746.5L1285.8 763.9L1280.9 776.6L1276.1 789.4L1269.3 812.5L1260.1 816.2L1253.3 805.0L1250.9 796.1L1256.2 784.2L1254.3 771.5L1266.4 763.9L1273.2 753.9ZM1502.5 660.9L1513.2 662.8L1526.7 675.9L1543.7 692.8L1554.3 704.0L1553.4 716.6L1547.1 716.6L1536.4 707.4L1527.2 692.8L1519.0 679.8L1505.4 668.6ZM1550.5 721.0L1554.3 716.6L1565.5 718.5L1576.1 721.5L1586.7 721.5L1595.5 725.9L1595.0 729.8L1578.5 727.8L1564.0 725.9L1556.3 723.9L1550.9 721.5ZM1595.5 727.3L1601.3 728.8L1598.8 730.8ZM1602.7 728.3L1606.1 728.3L1605.6 731.2L1602.7 731.2ZM1607.1 728.8L1617.2 727.8L1617.2 730.8L1607.5 731.7ZM1568.8 680.7L1571.7 678.3L1578.5 680.3L1588.2 672.5L1597.9 663.8L1602.7 658.9L1610.0 655.0L1618.2 662.3L1612.4 666.2L1611.4 683.2L1605.1 695.3L1602.7 704.9L1595.5 704.9L1580.9 703.5L1574.2 697.7L1570.3 690.4ZM1566.9 593.3L1574.6 588.7L1578.5 591.3L1576.1 597.4L1571.3 598.4L1567.4 596.9ZM1094.6 44.2L1092.2 18.1L1118.8 12.6L1147.9 26.2L1138.2 51.5L1123.7 85.8L1109.1 74.8ZM1133.3 6.9L1172.0 4.1L1152.7 31.4L1130.9 18.1ZM1293.0 187.9L1300.3 196.8L1319.6 198.2L1310.0 184.8L1314.8 157.7L1331.7 131.4L1351.1 110.5L1375.3 87.9L1372.9 83.6L1346.2 100.5L1324.5 110.5L1310.0 129.6L1302.7 152.6L1295.4 172.4ZM1501.1 34.0L1525.3 56.3L1549.5 31.4L1530.1 -16.8L1491.4 12.6ZM1264.0 -1.7L1293.0 12.6L1331.7 12.6L1346.2 -16.8L1307.5 -32.7L1268.8 -16.8ZM1750.3 117.3L1762.4 116.4L1771.1 123.0L1767.2 131.4L1752.7 130.5ZM8.3 117.3L20.4 116.4L29.1 123.0L25.2 131.4L10.7 130.5ZM1728.5 373.8L1734.8 388.5L1735.8 411.5L1733.4 433.2L1728.0 436.7L1728.5 407.8L1729.5 380.4ZM-13.5 373.8L-7.2 388.5L-6.2 411.5L-8.6 433.2L-14.0 436.7L-13.5 407.8L-12.5 380.4ZM1718.8 466.9L1727.6 460.4L1734.8 463.7L1746.9 455.1L1740.6 450.4L1727.6 440.9L1723.7 455.8ZM-23.2 466.9L-14.4 460.4L-7.2 463.7L4.9 455.1L-1.4 450.4L-14.4 440.9L-18.3 455.8ZM1591.6 796.1L1594.0 799.8L1590.6 815.7L1595.9 833.6L1601.3 851.6L1598.4 865.5L1611.9 869.0L1631.7 862.5L1641.4 857.3L1651.1 853.3L1665.6 849.9L1677.7 848.7L1689.8 856.2L1699.0 867.8L1706.7 857.3L1708.2 872.0L1716.4 882.2L1723.7 887.1L1735.8 892.0L1749.3 893.9L1757.6 885.8L1767.2 884.0L1773.0 862.5L1781.8 845.9L1784.7 829.2L1781.8 813.0L1771.1 799.8L1762.4 789.4L1747.9 779.1L1744.5 761.4L1735.8 756.4L1730.9 740.1L1726.1 751.5L1726.6 769.0L1718.8 775.0L1706.7 766.4L1697.1 761.4L1703.4 748.0L1685.0 744.0L1674.3 748.5L1668.0 760.4L1658.4 756.4L1646.3 758.9L1641.4 768.0L1632.7 776.6L1626.9 784.2L1615.3 788.4L1605.1 790.4ZM-150.4 796.1L-148.0 799.8L-151.4 815.7L-146.1 833.6L-140.7 851.6L-143.6 865.5L-130.1 869.0L-110.3 862.5L-100.6 857.3L-90.9 853.3L-76.4 849.9L-64.3 848.7L-52.2 856.2L-43.0 867.8L-35.3 857.3L-33.8 872.0L-25.6 882.2L-18.3 887.1L-6.2 892.0L7.3 893.9L15.6 885.8L25.2 884.0L31.0 862.5L39.7 845.9L42.7 829.2L39.7 813.0L29.1 799.8L20.4 789.4L5.9 779.1L2.5 761.4L-6.2 756.4L-11.1 740.1L-15.9 751.5L-15.4 769.0L-23.2 775.0L-35.3 766.4L-44.9 761.4L-38.6 748.0L-57.0 744.0L-67.7 748.5L-74.0 760.4L-83.6 756.4L-95.7 758.9L-100.6 768.0L-109.3 776.6L-115.1 784.2L-126.7 788.4L-136.9 790.4ZM1706.7 102.5L1728.5 110.5L1723.7 131.4L1709.2 125.9ZM-35.3 102.5L-13.5 110.5L-18.3 131.4L-32.8 125.9ZM448.0 102.3L465.3 79.0L480.8 75.3L476.9 90.7L465.3 113.8ZM530.9 32.7L540.6 30.9L561.9 58.0L558.0 67.6L536.8 53.9ZM565.7 46.4L577.3 48.4L585.0 63.6L573.4 67.6ZM494.3 52.0L507.8 46.4L511.7 53.9L507.8 75.3L496.3 77.3ZM575.4 68.5L589.8 69.4L589.8 75.3L576.3 75.7ZM573.4 84.9L588.9 86.9L592.7 100.5L579.2 100.5ZM667.7 237.0L672.2 229.7L677.5 233.4L675.7 243.2L669.5 244.0ZM243.5 371.3L251.2 368.8L245.4 374.7ZM233.3 377.1L240.1 373.8L237.2 380.4ZM224.1 382.0L230.9 379.6L225.6 385.3ZM197.0 390.8L206.7 389.3L199.4 393.2ZM177.7 393.2L187.3 392.4L180.1 395.5ZM153.5 395.5L165.6 393.2L158.3 397.1ZM1741.1 904.0L1759.0 905.2L1757.6 920.2L1750.3 922.9L1744.0 913.6ZM-0.9 904.0L17.0 905.2L15.6 920.2L8.3 922.9L2.0 913.6ZM1723.7 700.6L1738.2 706.4L1747.9 714.7L1756.6 718.5L1758.5 727.8L1768.2 738.1L1752.7 737.1L1738.2 725.9L1733.4 732.2L1723.7 732.2ZM-18.3 700.6L-3.8 706.4L5.9 714.7L14.6 718.5L16.5 727.8L26.2 738.1L10.7 737.1L-3.8 725.9L-8.6 732.2L-18.3 732.2ZM1759.0 714.7L1767.2 712.2L1774.5 708.8L1778.4 709.8L1772.1 718.1L1760.0 717.6ZM17.0 714.7L25.2 712.2L32.5 708.8L36.4 709.8L30.1 718.1L18.0 717.6ZM1798.7 720.0L1803.5 722.0L1813.2 726.3L1824.3 738.1L1821.4 738.6L1805.9 729.8ZM56.7 720.0L61.5 722.0L71.2 726.3L82.3 738.1L79.4 738.6L63.9 729.8ZM1850.5 761.4L1853.4 763.9L1856.3 775.6L1854.3 774.5L1848.5 765.4ZM108.5 761.4L111.4 763.9L114.3 775.6L112.3 774.5L106.5 765.4ZM1835.0 787.8L1839.8 790.4L1850.0 798.2L1847.6 799.3L1836.4 792.0ZM93.0 787.8L97.8 790.4L108.0 798.2L105.6 799.3L94.4 792.0ZM1899.3 774.0L1905.6 773.0L1904.2 777.6L1899.3 776.6ZM157.3 774.0L163.6 773.0L162.2 777.6L157.3 776.6ZM1877.1 865.5L1885.8 872.0L1892.1 879.8L1894.0 884.6L1905.1 885.2L1902.2 893.9L1897.4 897.0L1893.0 907.2L1886.3 908.5L1887.2 898.9L1882.4 894.5L1886.3 887.1L1884.3 878.5ZM135.1 865.5L143.8 872.0L150.1 879.8L152.0 884.6L163.1 885.2L160.2 893.9L155.4 897.0L151.0 907.2L144.3 908.5L145.2 898.9L140.4 894.5L144.3 887.1L142.3 878.5ZM1876.6 902.7L1884.8 907.8L1878.5 924.2L1869.8 929.0L1859.2 943.5L1847.1 939.3L1855.8 925.6L1870.3 912.3ZM134.6 902.7L142.8 907.8L136.5 924.2L127.8 929.0L117.2 943.5L105.1 939.3L113.8 925.6L128.3 912.3Z"/>
<path fill="#b2d2dd" d="M1543.7 395.5L1548.5 396.3L1556.7 389.3L1565.5 382.0L1570.3 372.2L1571.7 362.9L1569.8 361.2L1566.4 369.7L1561.6 379.6L1554.3 385.3L1545.6 394.0ZM1182.2 468.8L1191.4 469.5L1203.5 463.7L1210.8 463.7L1217.1 468.2L1227.7 470.8L1233.5 470.1L1242.7 466.3L1242.9 462.7L1239.8 457.1L1233.5 453.1L1224.3 445.7L1218.5 441.6L1213.2 443.0L1212.7 443.6L1206.9 447.0L1203.5 446.4L1203.5 440.2L1198.7 440.9L1203.5 436.7L1196.2 433.2L1190.0 433.2L1185.1 442.3L1180.3 449.1L1176.4 455.8L1174.5 460.4L1176.9 466.3ZM1218.0 441.6L1210.8 438.8L1211.7 434.6L1219.5 431.8L1229.6 428.3L1226.2 433.2L1224.3 436.7L1220.0 440.9ZM1169.6 474.0L1174.5 470.8L1181.7 470.1L1183.2 472.0L1176.9 474.0L1172.0 475.2ZM1284.8 474.0L1280.9 470.8L1278.5 466.9L1275.1 463.7L1271.2 457.1L1268.8 450.4L1269.8 445.7L1267.4 446.4L1271.2 439.5L1273.7 436.7L1278.5 433.9L1285.8 431.1L1292.5 429.0L1297.9 431.1L1298.8 436.7L1293.0 440.9L1289.6 442.3L1284.8 447.0L1289.2 453.1L1291.1 458.4L1295.4 463.7L1296.9 470.1L1297.9 476.5L1301.7 482.8L1302.2 488.9L1302.7 495.0L1297.9 496.2L1290.6 496.9L1283.3 493.2L1278.0 486.5L1280.0 479.6L1280.9 476.5ZM1331.7 433.9L1338.0 431.1L1339.5 434.6L1334.6 436.7ZM1397.1 436.0L1409.2 432.5L1423.7 432.5L1425.1 434.6L1411.6 435.3L1401.9 438.1ZM1186.6 322.9L1200.1 316.0L1191.4 306.0L1187.1 311.0ZM1210.8 314.0L1218.0 310.0L1213.2 293.5L1208.3 305.0ZM1195.3 692.8L1205.4 687.0L1208.3 690.4L1203.5 700.1L1194.8 700.6ZM1182.7 704.5L1184.6 704.9L1187.5 712.2L1192.4 729.3L1189.5 730.3L1184.6 719.5L1182.2 709.8ZM1205.9 734.2L1207.9 734.7L1209.8 744.0L1212.2 757.9L1209.8 756.4L1206.9 744.0ZM595.7 431.8L603.5 432.5L613.2 428.3L618.0 431.1L622.8 433.2L632.0 433.2L631.5 426.1L627.7 422.5L614.1 416.7L607.8 422.5L598.6 428.3ZM616.5 465.6L622.4 465.0L624.3 457.1L622.8 447.0L627.7 442.3L630.1 438.1L621.4 437.4L617.0 447.0L615.6 457.1ZM632.5 437.4L637.4 436.0L646.1 436.7L651.4 439.5L654.8 445.7L648.0 442.3L646.5 449.1L642.7 457.1L641.7 450.4L637.4 450.4L638.3 443.6ZM637.8 465.6L649.5 464.3L659.6 457.8L651.9 459.7L642.2 463.7ZM655.3 455.1L671.7 453.8L672.7 449.1L659.1 451.1ZM562.3 378.0L569.6 378.8L574.9 404.0L572.0 404.8L565.7 388.5ZM436.5 261.0L455.9 246.5L470.4 249.0L463.2 270.3L446.2 270.3ZM475.2 311.0L489.8 308.0L514.0 294.6L504.3 299.8L484.9 302.9L475.2 308.0Z"/>
<path fill="none" stroke="#c7b2c9" stroke-width="1.3" stroke-linejoin="round" opacity="0.9" d="M359.1 212.5L359.1 320.0L368.8 320.9L376.1 332.4L385.7 324.8L395.4 338.9L407.5 356.8L412.3 362.0L409.4 370.5M444.8 415.2L580.7 415.2L580.7 412.3L605.9 421.1L632.5 433.2L642.7 441.6L642.2 457.1L639.3 463.7L659.1 455.1L671.2 449.8L679.5 443.6L695.4 443.6L702.7 433.2L706.5 426.9L712.4 427.6L713.3 438.8L717.2 445.0M474.8 521.6L486.4 520.4L503.8 528.4L517.8 528.4L526.1 525.6L535.7 537.9L543.0 541.3L550.7 536.8L559.9 549.5L571.1 558.2M595.3 617.1L595.3 613.1L597.7 609.0L604.0 609.0L599.1 603.0L610.0 600.4L614.1 596.9M610.0 600.4L609.8 610.1L614.6 611.1M614.6 611.1L609.3 617.1L605.4 621.1M609.3 617.6L616.5 622.6M619.0 624.5L629.1 618.1L638.8 614.6M626.7 633.9L636.4 634.9M640.3 649.2L641.7 641.8M664.5 653.1L666.9 645.7M690.6 633.5L691.5 649.2L702.7 654.0L714.8 657.9L713.3 666.2L715.7 677.4L717.7 682.2M660.1 681.2L668.8 686.1L677.0 688.5L685.7 695.3L702.7 708.3L705.1 692.8L702.7 683.2L715.7 678.3L717.7 682.2L731.7 668.6L737.5 668.6L747.7 662.8L751.1 646.7M747.7 662.8L753.5 671.1L752.0 680.7L765.6 678.8L780.1 677.8L785.4 677.4L791.7 667.7M764.6 659.4L760.7 668.6L768.0 678.8M780.1 660.4L779.1 671.1L780.1 677.4M652.8 704.5L659.1 712.2L668.8 700.1L677.0 688.5M702.7 708.3L688.6 713.7L684.3 724.4L690.6 734.2L699.8 734.2L699.8 741.6L704.6 741.1L708.5 749.0L705.6 763.9L705.1 774.0L700.7 778.4M704.6 741.1L722.0 735.7L725.4 744.0L731.7 749.0L743.8 753.9L748.6 755.4L750.1 763.9L759.3 768.0L760.7 776.6L763.2 777.6L759.8 785.8L742.8 789.4L738.5 798.2L724.5 797.7L716.2 801.4L711.4 794.6L709.9 784.2L705.1 774.0M761.7 797.7L770.9 798.7L772.8 807.2L777.2 816.2L781.1 824.3L771.4 830.9L762.7 841.4L770.9 845.3L783.0 861.4M738.5 798.2L751.1 807.7L762.7 814.6L777.2 823.8M762.7 841.4L758.8 862.5M763.2 777.6L761.7 797.7M716.2 801.4L709.9 810.3L709.9 823.8L703.6 840.3L702.7 857.3L700.3 874.9L697.8 893.2L694.5 912.3L694.0 932.4L690.6 953.5L686.7 968.2L693.0 979.7L709.5 986.0M1032.7 506.4L1034.1 523.8L1024.0 530.1L999.3 545.1L999.3 550.6L1018.2 563.5L1047.2 584.0L1062.2 593.3L1070.4 592.3L1099.5 571.0L1089.8 561.4L1087.4 534.0L1089.8 527.3L1097.0 518.1M999.3 548.4L977.5 548.4M999.3 550.6L999.3 557.6L983.3 557.6L983.3 571.0L978.5 574.6L978.5 582.5L959.1 582.5M1018.2 563.5L1009.9 563.0L1014.8 607.5L985.8 612.1L982.4 616.1L971.2 606.5L961.6 608.5M1083.0 495.6L1081.6 509.4L1077.7 518.7L1087.4 534.0M1162.4 526.7L1162.4 578.8L1220.4 578.8M1162.4 578.8L1162.4 589.2L1157.5 591.8L1114.0 573.6L1099.5 571.0M1062.2 593.3L1061.7 607.0L1046.2 614.6L1029.3 614.6L1014.8 637.4L1027.9 634.4L1045.8 634.4L1051.1 626.0L1058.8 631.0L1089.8 623.1L1107.2 623.6L1107.2 619.6L1116.4 589.2L1114.0 573.6M982.4 616.1L986.2 627.5L993.0 632.0L1001.2 638.4L1014.8 637.4M1157.5 591.8L1157.5 611.6L1149.8 619.6L1147.9 627.0L1152.2 634.9L1145.4 641.8L1130.9 644.8L1116.4 651.6L1114.0 639.4L1111.6 629.5L1107.2 623.6M1107.2 623.6L1104.3 638.4L1097.0 656.0L1082.5 665.7M1058.8 631.0L1054.5 657.0M1045.8 634.4L1050.1 657.9M1041.4 634.4L1047.2 658.4M1027.9 634.4L1026.4 663.3M1001.2 638.4L1000.3 651.1L1005.1 666.7M978.5 644.3L990.6 639.9L993.0 646.7L986.2 654.5M960.6 627.5L975.1 626.5L986.2 627.5M1152.2 634.9L1155.1 645.7L1172.0 641.3L1186.6 637.9L1201.1 636.9L1205.9 641.8L1210.8 632.0L1218.0 618.1L1227.7 600.4M1155.1 645.7L1174.5 663.8L1189.0 671.1L1205.9 666.2L1214.6 663.8L1230.1 671.1L1244.6 668.6L1259.2 663.8L1273.2 649.2L1254.3 644.3L1248.5 632.0M1244.6 668.6L1239.8 674.4L1239.8 692.8L1242.2 696.2M1205.9 666.2L1210.8 680.7L1205.9 688.0L1205.9 692.8L1223.8 704.9L1231.1 710.8M1236.9 739.1L1222.9 744.0L1208.8 744.0M1100.4 717.1L1121.2 724.4L1126.1 726.8L1143.0 723.4L1147.9 741.6L1157.5 743.0L1157.5 751.5L1147.9 751.5L1147.9 766.4L1142.5 776.6L1106.7 771.5L1098.5 773.0M1100.4 712.2L1111.6 709.8L1119.8 700.1L1127.5 683.2L1131.4 671.1L1147.9 666.2L1162.4 662.8L1174.5 663.8M1116.4 651.6L1111.6 666.2L1118.8 677.4L1096.1 677.4L1088.8 676.9M1096.1 677.4L1104.3 683.2L1111.6 697.7L1099.5 700.1L1094.6 706.4M1142.5 776.6L1154.6 774.5L1163.3 775.6L1181.7 765.4L1201.1 769.0L1200.6 797.2L1192.9 799.3L1183.7 798.2L1166.2 786.8L1163.3 775.6M1138.2 797.2L1138.2 811.9L1138.2 831.4L1121.2 832.5M1138.2 811.9L1164.8 817.3L1172.0 808.7L1183.7 798.2M1195.8 817.3L1200.6 822.7M1157.5 743.0L1176.9 729.3L1190.4 728.3L1201.1 734.2M1183.7 692.8L1189.0 693.3L1191.4 680.7L1189.0 671.1M1215.1 495.6L1225.3 496.2L1239.8 494.4L1246.6 494.4L1258.2 493.8L1255.3 480.3L1258.2 478.4L1252.4 474.0L1248.5 466.9L1242.7 466.3M1213.7 517.5L1218.5 509.9L1229.1 516.4L1239.8 510.5L1241.2 494.4M1229.1 516.4L1231.1 523.3L1220.4 527.3L1210.8 538.5M1231.1 523.3L1257.7 540.2L1266.4 540.7L1273.7 538.5M1258.2 493.8L1264.0 504.0L1261.6 512.9L1272.7 527.3L1276.6 536.3M1218.5 509.9L1214.6 519.8M1210.3 538.5L1206.9 528.4M1291.1 565.1L1295.9 574.1L1308.5 575.2L1310.9 578.8L1307.5 589.2L1293.0 594.3L1294.0 611.6M1249.5 605.5L1264.0 603.0L1271.2 596.9L1293.0 594.3M1339.5 561.9L1345.8 544.0L1336.6 536.8L1336.1 527.3L1338.0 503.4L1326.9 492.0L1302.7 493.2M1339.5 561.9L1345.8 544.0L1363.2 538.5L1364.6 527.3L1377.7 517.5L1385.0 509.9L1387.4 498.1L1399.5 495.0M1338.0 503.4L1353.5 495.0L1363.2 492.6L1372.9 492.0L1385.0 495.0L1399.5 495.0M1385.0 509.9L1399.5 509.9L1406.7 522.7L1402.4 530.1L1389.8 544.0L1382.5 547.9L1377.7 554.9L1383.0 560.3L1373.3 568.3M1406.7 522.7L1421.3 521.6L1423.7 532.9L1430.9 542.4L1447.9 549.5L1467.2 554.9L1468.2 547.3L1476.4 545.7L1486.6 549.5L1503.5 542.4L1512.7 547.3L1510.8 563.0L1498.7 573.6L1491.4 578.8L1488.0 584.0M1467.2 554.9L1469.6 563.0L1471.6 578.8M1476.4 554.9L1484.2 561.4L1489.0 565.7L1484.2 571.0L1488.0 584.0M1512.7 547.3L1518.0 563.0L1522.9 578.3L1531.1 581.4L1535.0 576.7L1542.2 575.2L1556.7 574.6L1564.0 581.4M1522.9 578.3L1527.7 589.2L1515.6 596.9L1518.5 609.6L1521.4 634.4L1518.5 639.4M1531.1 581.4L1527.7 596.9L1535.0 599.4L1548.0 607.0L1551.9 618.6L1539.8 618.1L1537.4 627.0M1548.0 607.0L1561.6 616.6L1561.6 627.0L1555.3 634.4L1547.1 637.4M1535.0 576.7L1542.2 586.6L1547.1 591.8L1551.9 597.9L1557.7 604.5L1561.6 616.6M1526.7 656.5L1532.5 659.9L1536.4 657.9M1571.7 678.3L1578.5 682.2L1588.2 680.7L1597.9 675.9L1602.7 667.7L1611.4 667.7M1242.7 466.3L1251.9 459.7L1261.6 460.4L1272.7 468.8L1276.1 465.0M1258.2 478.4L1266.4 483.4L1273.7 486.5L1278.0 486.5M1267.4 446.4L1278.5 433.9L1288.2 422.5L1307.5 404.0L1322.1 400.2L1336.6 401.7L1339.0 388.5L1331.7 376.3L1355.9 371.3L1375.3 364.6L1397.1 376.3L1411.6 374.7L1418.8 388.5L1430.9 400.2L1443.0 400.2L1452.7 415.2L1463.8 414.5M1463.8 414.5L1476.9 404.0L1498.7 407.8L1515.6 392.4L1535.0 396.3L1554.3 405.5L1566.4 411.5L1593.0 406.3L1606.1 409.3L1617.2 388.5L1624.5 382.0L1636.6 380.4L1655.9 407.8L1672.9 422.5L1692.2 420.4L1675.3 444.3L1673.4 461.0M1463.8 414.5L1481.7 436.7L1479.3 443.6L1503.5 448.4L1525.3 460.4L1549.5 466.3L1573.7 459.7L1583.4 443.6L1602.7 433.2L1620.6 428.3L1606.1 409.3M1463.8 414.5L1455.1 429.7L1443.0 428.3L1440.6 440.2L1428.5 443.6L1430.0 457.1L1409.2 470.1L1399.5 476.5L1397.1 479.6L1403.3 493.2L1404.3 502.8L1418.8 504.0L1428.5 512.9L1421.3 521.6M1297.9 463.7L1312.4 466.9L1331.7 463.7L1339.0 470.1L1353.5 479.6L1363.2 492.6M1307.5 443.6L1312.4 468.2M1331.7 463.7L1331.7 447.0L1325.0 439.5L1307.5 443.6L1297.9 463.7M1397.1 479.6L1380.1 471.4L1375.3 476.5L1383.5 479.6L1387.4 498.1M1409.2 470.1L1389.8 466.9L1382.5 461.7L1385.0 458.4L1399.5 457.1L1430.0 457.1M1339.0 470.1L1343.8 453.8L1351.1 453.8L1360.8 463.7L1372.9 470.1L1375.3 476.5M1032.7 454.4L1043.8 459.1L1056.9 461.0M1005.1 493.8L1007.5 484.0L1007.5 478.4L1008.0 464.3L1002.2 463.7L998.8 464.3M1054.0 399.4L1061.7 407.8L1069.5 411.5L1072.4 411.5L1081.1 415.2L1078.2 425.4L1070.4 435.3L1075.3 440.2L1077.7 451.8M1057.9 397.1L1065.6 397.1L1071.4 394.0L1075.3 382.0M1070.4 401.7L1071.4 394.0M1069.5 411.5L1072.4 405.5L1070.4 401.7M1078.2 425.4L1087.4 426.1L1091.7 430.4L1100.4 429.0L1104.3 432.5L1107.7 439.5M1070.4 435.3L1082.0 436.7L1085.0 438.1L1091.7 430.4M1083.0 368.8L1086.9 369.7M1087.4 426.1L1104.3 426.1L1108.2 417.4L1100.4 405.5L1113.0 401.0L1112.0 387.7L1110.1 377.1M1100.4 405.5L1114.0 400.2L1121.2 404.0L1132.4 411.5L1123.7 422.5L1123.2 416.7L1114.0 416.0L1108.2 417.4M1123.2 416.7L1132.4 411.5L1150.3 414.5L1148.8 419.6L1140.6 421.1L1132.4 424.0L1123.7 422.5L1121.2 431.1L1107.7 439.5M1121.2 431.1L1128.5 438.1L1135.3 442.3L1145.4 433.9L1152.2 423.3L1148.8 419.6M1107.7 439.5L1117.4 440.9L1121.2 433.2M1117.4 440.9L1123.7 443.0L1133.3 443.6L1135.3 442.3M1133.3 443.6L1136.2 453.8L1130.9 460.4M1135.3 442.3L1150.3 449.1L1152.7 457.1L1149.8 461.7L1143.0 462.4L1138.2 458.4L1136.2 453.8M1150.3 449.1L1162.4 452.4L1176.9 451.8M1149.8 461.7L1152.2 468.2L1162.4 466.9L1168.7 465.6L1176.9 463.7M1138.2 458.4L1141.1 468.2L1143.0 476.5L1138.2 479.0M1152.2 468.2L1141.1 470.1M1145.4 433.9L1157.5 423.3L1170.1 420.4L1177.9 440.2L1185.1 442.3M1170.1 420.4L1179.3 422.5L1186.6 432.5M1152.2 423.3L1157.5 423.3M1150.3 414.5L1157.5 404.0L1156.1 392.4L1155.1 377.1L1152.7 373.8M1157.5 404.0L1167.2 394.0L1189.0 396.3L1195.3 391.6L1205.9 390.0L1213.2 404.8L1225.3 408.5L1235.0 410.8L1233.0 422.5L1226.2 429.0M1152.7 373.8L1164.8 374.7L1171.1 365.5L1176.9 358.6L1194.8 391.6M1143.5 362.0L1157.5 356.0L1169.6 362.0M1143.0 352.5L1160.0 342.6L1173.5 346.2L1176.9 358.6M1175.9 328.6L1173.5 346.2M1176.9 358.6L1191.4 359.4L1196.2 380.4M1095.6 331.5L1101.9 313.0L1100.9 287.1L1111.6 264.6L1121.2 240.3L1133.3 227.4L1140.6 220.7M1140.6 220.7L1155.1 224.7L1162.4 226.0L1179.3 220.7L1186.6 211.1M1158.5 261.0L1156.1 240.3L1140.6 220.7M1179.3 220.7L1182.7 249.0L1186.6 287.1L1193.8 294.6L1175.9 318.0"/>
<rect x="169.6" y="0" width="1.5" height="1017" fill="#dcdcdc" opacity="0.6"/>
<rect x="605.1" y="0" width="1.5" height="1017" fill="#dcdcdc" opacity="0.6"/>
<rect x="1040.7" y="0" width="1.5" height="1017" fill="#dcdcdc" opacity="0.6"/>
<rect x="1476.2" y="0" width="1.5" height="1017" fill="#dcdcdc" opacity="0.6"/>
<rect x="0" y="251.8" width="1610" height="1.5" fill="#dcdcdc" opacity="0.6"/>
<rect x="0" y="687.2" width="1610" height="1.5" fill="#dcdcdc" opacity="0.6"/>
</svg><svg class="abs" style="left:0;top:0" width="1610" height="1017" viewBox="0 0 1610 1017">
<defs>
<linearGradient id="pg" x1="0" y1="0" x2="0" y2="1"><stop offset="0" stop-color="#62a0d8"/><stop offset="0.55" stop-color="#3f86cf"/><stop offset="1" stop-color="#2a6fc3"/></linearGradient>
<filter id="blur3" x="-50%" y="-50%" width="200%" height="200%"><feGaussianBlur stdDeviation="3.5"/></filter>
<g id="pin">
  <path d="M21 66 L3.04 29.3 A20 20 0 1 1 38.96 29.3 Z" fill="url(#pg)" stroke="#2f6a9e" stroke-width="1.6" stroke-linejoin="round"/>
  <path d="M21 61.5 L5.6 29.5 A17.6 17.6 0 1 1 36.4 29.5 Z" fill="none" stroke="#79b0e2" stroke-width="1" opacity="0.55"/>
  <circle cx="21" cy="20.3" r="7.4" fill="#fff" stroke="#2c5f8e" stroke-width="1.6"/>
</g>
<filter id="blur5" x="-80%" y="-80%" width="260%" height="260%"><feGaussianBlur stdDeviation="6.5"/></filter>
<g id="pshadow" filter="url(#blur5)" opacity="0.24"><path d="M19 66 L34 63 L62 42 L46 28 L22 56 Z" fill="#000"/><ellipse cx="53" cy="37" rx="17" ry="12" transform="rotate(-38 53 37)" fill="#000"/></g>
<g id="vol">
  <g fill="#c1d1dc"><circle cx="19" cy="12" r="6.5"/><circle cx="26" cy="8" r="8"/><circle cx="33.5" cy="11" r="6.8"/><circle cx="31" cy="17" r="6"/><circle cx="21" cy="17.5" r="5.5"/><circle cx="26" cy="18" r="6"/></g>
  <path d="M21.3 23.4 L31.8 23.4 L41.3 42.2 L45.1 42.2 L53 52.3 Q53.3 53.8 52 53.8 L1 53.8 Q-0.3 53.8 0.2 52.3 L8 42.2 L11.6 42.2 Z" fill="#1f2a47"/>
  <path d="M21.3 23.4 L31.8 23.4 L36.6 33.8 Q35.5 36.2 33.6 34.2 L30.2 28.5 L28.6 38.4 Q26.5 41.5 24.6 38.4 L23.1 28.5 L20 34.2 Q18.2 36.5 17.2 34.2 Z" fill="#d6534a"/>
  <g stroke="#101828" stroke-width="2.2" stroke-linecap="round" fill="none"><path d="M10.5 46.5 L8.2 49.8"/><path d="M20.6 43.2 L19 48.5"/><path d="M33.4 43.2 L35 48.5"/><path d="M43.5 46.5 L45.8 49.8"/></g>
</g>
</defs>
<use href="#vol" x="932.6" y="234.4"/>
<use href="#vol" x="1026.2" y="435.4"/>
<use href="#vol" x="1084.0" y="443.7"/>
<use href="#vol" x="1087.0" y="455.6"/>
<use href="#vol" x="1087.0" y="462.7"/>
<use href="#vol" x="947.4" y="513.6"/>
<use href="#vol" x="927.2" y="520.6"/>
<use href="#vol" x="717.9" y="586.6"/>
<use href="#vol" x="1283.0" y="765.5"/>
<use href="#pshadow" x="929.0" y="201.6"/>
<use href="#pshadow" x="1032.7" y="347.0"/>
<use href="#pshadow" x="1036.0" y="370.5"/>
<use href="#pshadow" x="1073.0" y="383.0"/>
<use href="#pshadow" x="1082.6" y="397.6"/>
<use href="#pshadow" x="1030.8" y="398.5"/>
<use href="#pshadow" x="1086.4" y="419.6"/>
<use href="#pshadow" x="1136.1" y="421.0"/>
<use href="#pshadow" x="1094.4" y="425.0"/>
<use href="#pin" x="929.0" y="201.6"/>
<use href="#pin" x="1032.7" y="347.0"/>
<use href="#pin" x="1036.0" y="370.5"/>
<use href="#pin" x="1073.0" y="383.0"/>
<use href="#pin" x="1082.6" y="397.6"/>
<use href="#pin" x="1030.8" y="398.5"/>
<use href="#pin" x="1086.4" y="419.6"/>
<use href="#pin" x="1136.1" y="421.0"/>
<use href="#pin" x="1094.4" y="425.0"/>
</svg>
<div class="abs" style="left:18px;top:18px;width:57px;height:108px;border:3px solid rgba(0,0,0,0.2);border-radius:6px;background:#fff;background-clip:padding-box"></div>
<div class="abs" style="left:21px;top:70.3px;width:51px;height:1.7px;background:#ccc"></div>
<div class="abs" style="left:35.2px;top:46.3px;width:21px;height:4.5px;background:#000"></div>
<div class="abs" style="left:43.5px;top:38px;width:4.5px;height:21px;background:#000"></div>
<div class="abs" style="left:35.2px;top:97.6px;width:21px;height:4.5px;background:#000"></div>
<div class="abs" style="left:18px;top:818px;width:184px;height:182px;border:2.5px solid #c9c9c9;border-radius:7px;background:#fff;box-shadow:0 2px 14px rgba(0,0,0,0.25)"></div>
<svg class="abs" style="left:38px;top:839.3px" width="42" height="67" viewBox="0 0 42 67"><use href="#pin" x="0" y="0"/></svg>
<div class="abs" style="left:84.5px;top:861px;font-size:20.3px;line-height:1;color:#000;white-space:nowrap">Institutions</div>
<svg class="abs" style="left:38.6px;top:938.7px" width="40.5" height="41" viewBox="0 0 53 54"><use href="#vol" x="0" y="0"/></svg>
<div class="abs" style="left:86px;top:947px;font-size:20.3px;line-height:1;color:#000;white-space:nowrap">Volcanoes</div>
<div class="abs" style="left:1053px;top:988.4px;width:557px;height:28.6px;background:rgba(255,255,255,0.8)"></div>
<svg class="abs" style="left:1060.6px;top:996.4px" width="21.2" height="12.8" viewBox="0 0 12 8"><rect width="12" height="4" fill="#4C7BE1"/><rect y="4" width="12" height="4" fill="#FFD500"/></svg>
<div class="abs" style="left:1086px;top:990.3px;font-size:19px;line-height:24px;color:#333;white-space:nowrap"><span style="color:#3379b5">Leaflet</span> | Map data © <span style="color:#3379b5">OpenStreetMap</span> contributors, <span style="color:#3379b5">CC-BY-SA</span></div>
</div>

<div id="panel">
<div class="abs" style="left:0;top:0;width:536px;height:103px;background:#1f2a37"></div>
<div class="abs" style="left:0;top:103px;width:536px;height:2px;background:#e6e9ec"></div>
<div class="abs" style="left:0;top:105px;width:536px;height:635px;background:linear-gradient(180deg,#f6f6f7,#f3f4f5)"></div>
<svg class="ic" style="left:22.00px;top:19.70px;color:#e8873a;overflow:visible" width="24.49" height="24.30" viewBox="0 0 512 512" preserveAspectRatio="none"><path d="M160 144c-35.3 0-64-28.7-64-64s28.7-64 64-64c15.7 0 30 5.6 41.2 15C212.4 12.4 232.8 0 256 0s43.6 12.4 54.8 31c11.1-9.4 25.5-15 41.2-15 35.3 0 64 28.7 64 64s-28.7 64-64 64c-14.7 0-28.3-5-39.1-13.3l-32 48C275.3 187 266 192 256 192s-19.3-5-24.9-13.3l-32-48C188.3 139 174.7 144 160 144m-16 208 48.4-24.2c10.2-5.1 21.6-7.8 33-7.8 19.6 0 38.4 7.8 52.2 21.6l32.5 32.5c6.3 6.3 14.9 9.9 23.8 9.9 11.3 0 21.8-5.6 28-15l9.7-14.6-59-66.3c-9.1-10.2-22.2-16.1-35.9-16.1h-41.8c-13.7 0-26.8 5.9-35.9 16.1l-59.9 67.4 4.7-3.5zm19.4-95.8c18.2-20.5 44.3-32.2 71.8-32.2H277c27.4 0 53.5 11.7 71.8 32.2l150.2 169c8.5 9.5 13.2 21.9 13.2 34.7 0 28.8-23.4 52.2-52.2 52.2L52.2 512C23.4 512 0 488.6 0 459.8c0-12.7 4.7-25.1 13.2-34.6z"/></svg>
<div class="abs" style="left:63.7px;top:17.1px;font-size:22.4px;line-height:33.4px;font-weight:bold;color:#f3f4f6;white-space:nowrap">Volcano</div>
<div class="abs" style="left:22px;top:50.5px;font-size:22.4px;line-height:33.4px;font-weight:bold;color:#f3f4f6;white-space:nowrap">Observatory</div>
<div class="abs" style="left:248px;top:19.7px;width:166.8px;height:63px;border-radius:9px;background:#f19d38"></div>
<div class="abs" style="left:261.7px;top:22.7px;font-size:18.8px;line-height:27.6px;font-weight:bold;color:#fff;white-space:nowrap">Under<br>development</div>
<div class="abs" style="left:415.4px;top:16px;width:99.2px;height:70.8px;border-radius:14px;background:#37414e"></div>
<div class="abs" style="left:425.7px;top:21.8px;font-size:19.5px;line-height:28.8px;font-weight:bold;color:#e5e7eb;white-space:nowrap">6/9<br>Active</div>

<div class="abs" style="left:14.5px;top:119.5px;width:507.5px;height:604px;border-radius:11px;border:2px solid #0f1b29;background:#f2f3f3;box-shadow:0 6px 16px rgba(0,0,0,0.10);overflow:hidden">
  <div class="abs" style="left:0;top:0;width:3px;height:600px;background:#df7f2f"></div>
</div>

<div class="abs" style="left:31px;top:134.5px;width:475.5px;height:253.8px;border-radius:10px;border:2px solid #1c2633;overflow:hidden;box-shadow:0 4px 12px rgba(0,0,0,0.18);background:#2a4632">
<svg width="471.5" height="249.8" viewBox="0 0 471 249" preserveAspectRatio="none" style="display:block">
  <defs>
    <linearGradient id="sky" x1="0" y1="0" x2="0" y2="1"><stop offset="0" stop-color="#8fa8bc"/><stop offset="0.25" stop-color="#7791a6"/><stop offset="0.45" stop-color="#64807f"/><stop offset="1" stop-color="#4d6a5a"/></linearGradient>
    <linearGradient id="mtn" x1="0" y1="0" x2="0.25" y2="1"><stop offset="0" stop-color="#56734a"/><stop offset="0.2" stop-color="#3e5b3f"/><stop offset="0.5" stop-color="#283f34"/><stop offset="1" stop-color="#1f3230"/></linearGradient>
    <linearGradient id="far" x1="0" y1="0" x2="0" y2="1"><stop offset="0" stop-color="#6b879c"/><stop offset="0.5" stop-color="#5c7884"/><stop offset="1" stop-color="#5b7a64"/></linearGradient>
    <filter id="cb" x="-30%" y="-30%" width="160%" height="160%"><feGaussianBlur stdDeviation="3"/></filter>
    <filter id="cb2" x="-30%" y="-30%" width="160%" height="160%"><feGaussianBlur stdDeviation="1.5"/></filter>
    <filter id="sb" x="-30%" y="-30%" width="160%" height="160%"><feGaussianBlur stdDeviation="6"/></filter>
    <filter id="noise" x="0" y="0" width="100%" height="100%"><feTurbulence type="fractalNoise" baseFrequency="0.22" numOctaves="2" seed="5"/><feColorMatrix values="0 0 0 0 0.06  0 0 0 0 0.1  0 0 0 0 0.14  0 0 0 -3 1.55"/></filter>
    <filter id="noise2" x="0" y="0" width="100%" height="100%"><feTurbulence type="fractalNoise" baseFrequency="0.25" numOctaves="1" seed="9"/><feColorMatrix values="0 0 0 0 0.5  0 0 0 0 0.62  0 0 0 0 0.32  0 0 0 3 -1.75"/></filter>
    <clipPath id="mclip"><path d="M0 112 L40 100 L80 74 L120 58 L151 43 L180 36 L202 29 L223 33 L260 49 L300 60 L327 67 L380 72 L471 86 L471 249 L0 249 Z"/></clipPath>
  </defs>
  <rect width="471" height="249" fill="url(#sky)"/>
  <path d="M270 -10 L481 -10 L481 100 L420 82 L360 70 L320 60 L290 42 Z" fill="url(#far)" filter="url(#sb)"/>
  <path d="M385 8 L410 2 L440 10 L471 5 L471 42 L440 36 L410 30 L380 22 Z" fill="#4e6a82" opacity="0.9" filter="url(#sb)"/>
  <path d="M330 48 L390 52 L430 58 L471 60 L471 74 L400 68 L340 60 Z" fill="#7f9a76" opacity="0.75" filter="url(#sb)"/>
  <path d="M0 112 L40 100 L80 74 L120 58 L151 43 L180 36 L202 29 L223 33 L260 49 L300 60 L327 67 L380 72 L471 86 L471 249 L0 249 Z" fill="url(#mtn)"/>
  <g clip-path="url(#mclip)">
    <g fill="#172536" opacity="0.7" filter="url(#sb)">
      <path d="M150 110 L190 100 L210 150 L205 200 L170 190 L145 140 Z"/>
      <path d="M30 200 L100 185 L135 249 L20 249 Z"/>
      <path d="M250 130 L285 120 L300 180 L262 185 Z"/>
      <path d="M320 150 L385 160 L415 240 L340 249 L305 205 Z"/>
      <path d="M410 95 L471 100 L471 170 L430 150 Z"/>
      <path d="M195 205 L255 205 L280 249 L200 249 Z"/>
      <path d="M0 140 L50 130 L70 170 L0 185 Z"/>
    </g>
    <g fill="#7f9c55" opacity="0.42" filter="url(#cb2)">
      <path d="M172 42 L178 44 L132 108 L122 104 Z"/><path d="M190 38 L196 40 L160 122 L150 118 Z"/><path d="M203 33 L209 34 L216 112 L206 112 Z"/><path d="M222 37 L228 39 L254 102 L244 104 Z"/><path d="M242 45 L248 47 L306 96 L296 99 Z"/><path d="M262 51 L268 53 L350 102 L340 104 Z"/><path d="M300 61 L306 62 L430 110 L420 112 Z"/><path d="M148 50 L154 53 L98 104 L90 100 Z"/><path d="M330 74 L336 75 L460 100 L452 103 Z"/><path d="M120 58 L126 61 L60 112 L52 108 Z"/>
    </g>
    <g fill="#6d8a4c" opacity="0.35" filter="url(#sb)"><ellipse cx="205" cy="62" rx="40" ry="20"/><ellipse cx="280" cy="80" rx="45" ry="16"/><ellipse cx="400" cy="100" rx="50" ry="12"/><ellipse cx="110" cy="95" rx="35" ry="14"/></g>
    <rect width="471" height="249" filter="url(#noise)" opacity="0.5"/>
    <rect width="471" height="249" filter="url(#noise2)" opacity="0.3"/>
    <path d="M0 215 L45 195 L80 249 L0 249 Z" fill="#46743a" opacity="0.35" filter="url(#sb)"/>
  </g>
  <g fill="#f4f6f7" filter="url(#cb)">
    <ellipse cx="28" cy="48" rx="40" ry="30"/><ellipse cx="70" cy="30" rx="42" ry="22"/><ellipse cx="112" cy="18" rx="32" ry="14"/><ellipse cx="20" cy="18" rx="25" ry="14"/><ellipse cx="60" cy="58" rx="25" ry="10"/>
    <ellipse cx="168" cy="14" rx="48" ry="13"/><ellipse cx="228" cy="12" rx="52" ry="12"/><ellipse cx="288" cy="16" rx="30" ry="10"/><ellipse cx="312" cy="24" rx="12" ry="7"/>
    <ellipse cx="146" cy="30" rx="18" ry="8"/><ellipse cx="232" cy="38" rx="13" ry="7"/><ellipse cx="250" cy="30" rx="16" ry="7"/>
    <ellipse cx="25" cy="92" rx="28" ry="12"/><ellipse cx="58" cy="84" rx="20" ry="7"/><ellipse cx="8" cy="106" rx="14" ry="8"/>
  </g>
  <g fill="#c9d3dc" opacity="0.5" filter="url(#cb2)"><ellipse cx="88" cy="62" rx="22" ry="6"/><ellipse cx="110" cy="40" rx="14" ry="5"/></g>
  <g fill="#ffffff" filter="url(#cb2)" opacity="0.95"><ellipse cx="339" cy="12" rx="12" ry="5"/><ellipse cx="372" cy="29" rx="9" ry="4"/></g>
</svg>
</div>

<svg class="ic" style="left:29.80px;top:410.00px;color:#e8873a;overflow:visible" width="20.50" height="18.13" viewBox="0 0 512 512" preserveAspectRatio="none"><path d="M256 0c14.7 0 28.2 8.1 35.2 21l216 400c6.7 12.4 6.4 27.4-.8 39.5S486.1 480 472 480H40c-14.1 0-27.2-7.4-34.4-19.5s-7.5-27.1-.8-39.5l216-400c7-12.9 20.5-21 35.2-21m0 352a32 32 0 1 0 0 64 32 32 0 1 0 0-64m0-192c-18.2 0-32.7 15.5-31.4 33.7l7.4 104c.9 12.5 11.4 22.3 23.9 22.3 12.6 0 23-9.7 23.9-22.3l7.4-104c1.3-18.2-13.1-33.7-31.4-33.7z"/></svg>
<div class="abs" style="left:64px;top:406.2px;font-size:23.7px;line-height:23.7px;font-weight:bold;color:#1f2937;white-space:nowrap">Mountagne Pelee</div>
<div class="abs" style="left:415px;top:403.4px;width:92px;height:30.6px;border-radius:16px;border:1.5px solid #f3c2c6;background:#fbe4e6"></div>
<div class="abs" style="left:415px;top:409.7px;width:92px;text-align:center;font-size:18.4px;line-height:18.4px;font-weight:bold;color:#d23c3c;white-space:nowrap">ACTIVE</div>
<div class="abs" style="left:30px;top:445.9px;font-size:21.8px;line-height:25.6px;font-style:italic;color:#5f6b77;white-space:nowrap">Known for the catastrophic eruption in 1902 that<br>destroyed Saint-Pierre.</div>

<div class="abs" style="left:30px;top:515.6px;font-size:18px;line-height:18px;font-weight:bold;color:#1f2937;white-space:nowrap">Location:</div>
<div class="abs" style="right:29px;top:514.9px;font-size:19px;line-height:19px;color:#4b5563;white-space:nowrap">Martinique, Lesser Antilles, France</div>
<div class="abs" style="left:30px;top:545.8px;font-size:18px;line-height:18px;font-weight:bold;color:#1f2937;white-space:nowrap">Elevation:</div>
<div class="abs" style="right:29px;top:545.1px;font-size:19px;line-height:19px;color:#4b5563;white-space:nowrap">1397 m</div>
<div class="abs" style="left:30px;top:575.8px;font-size:18px;line-height:18px;font-weight:bold;color:#1f2937;white-space:nowrap">Type:</div>
<div class="abs" style="right:29px;top:575.1px;font-size:19px;line-height:19px;color:#4b5563;white-space:nowrap">Stratovolcano</div>
<div class="abs" style="left:30px;top:605.9px;font-size:18px;line-height:18px;font-weight:bold;color:#1f2937;white-space:nowrap">Last Activity:</div>
<div class="abs" style="right:29px;top:605.2px;font-size:19px;line-height:19px;color:#4b5563;white-space:nowrap">1932</div>
<div class="abs" style="left:30px;top:640px;width:477px;height:1.6px;background:#d5dbe2"></div>

<div class="abs" style="left:30px;top:656px;width:477px;height:52.7px;border-radius:11px;background:#d9833b"></div>
<svg class="ic" style="left:179.10px;top:672.60px;color:#ffffff;overflow:visible" width="20.00" height="19.60" viewBox="0 0 512 512" preserveAspectRatio="none"><path d="M320 0c-17.7 0-32 14.3-32 32s14.3 32 32 32h82.7L201.3 265.4c-12.5 12.5-12.5 32.8 0 45.3s32.8 12.5 45.3 0L448 109.3V192c0 17.7 14.3 32 32 32s32-14.3 32-32V32c0-17.7-14.3-32-32-32zM80 96c-44.2 0-80 35.8-80 80v256c0 44.2 35.8 80 80 80h256c44.2 0 80-35.8 80-80v-80c0-17.7-14.3-32-32-32s-32 14.3-32 32v80c0 8.8-7.2 16-16 16H80c-8.8 0-16-7.2-16-16V176c0-8.8 7.2-16 16-16h80c17.7 0 32-14.3 32-32s-14.3-32-32-32z"/></svg>
<div class="abs" style="left:205.7px;top:673.6px;font-size:20.5px;line-height:20.5px;font-weight:bold;color:#fff;white-space:nowrap">View in Catalog</div>

<div class="abs" style="left:0;top:739.8px;width:536px;height:1.5px;background:#e3e6ea"></div>
<div class="abs" style="left:0;top:741.3px;width:536px;height:90px;background:#f8f9fb"></div>
<div class="abs" style="left:22.7px;top:757.2px;width:46.4px;height:46.4px;border-radius:50%;border:1.5px solid #e3e6ea;background:#fff"></div>
<div class="abs" style="left:467.7px;top:757.2px;width:46.4px;height:46.4px;border-radius:50%;border:1.5px solid #e3e6ea;background:#fff"></div>
<svg class="ic" style="left:39.40px;top:771.16px;color:#1f2937;overflow:visible" width="15.75" height="18.28" viewBox="0 0 320 512" preserveAspectRatio="none"><path d="M9.4 233.4c-12.5 12.5-12.5 32.8 0 45.3l192 192c12.5 12.5 32.8 12.5 45.3 0s12.5-32.8 0-45.3L77.3 256 246.6 86.6c12.5-12.5 12.5-32.8 0-45.3s-32.8-12.5-45.3 0l-192 192z"/></svg>
<svg class="ic" style="left:483.23px;top:771.16px;color:#1f2937;overflow:visible" width="15.75" height="18.28" viewBox="0 0 320 512" preserveAspectRatio="none"><path d="M311.1 233.4c12.5 12.5 12.5 32.8 0 45.3l-192 192c-12.5 12.5-32.8 12.5-45.3 0s-12.5-32.8 0-45.3L243.2 256 73.9 86.6c-12.5-12.5-12.5-32.8 0-45.3s32.8-12.5 45.3 0l192 192z"/></svg>
<div class="abs" style="left:217.9px;top:771.2px;width:100px;text-align:center;font-size:19.8px;line-height:19.8px;color:#4b5563;white-space:nowrap">7 of 9</div>

</div>
</body></html>
